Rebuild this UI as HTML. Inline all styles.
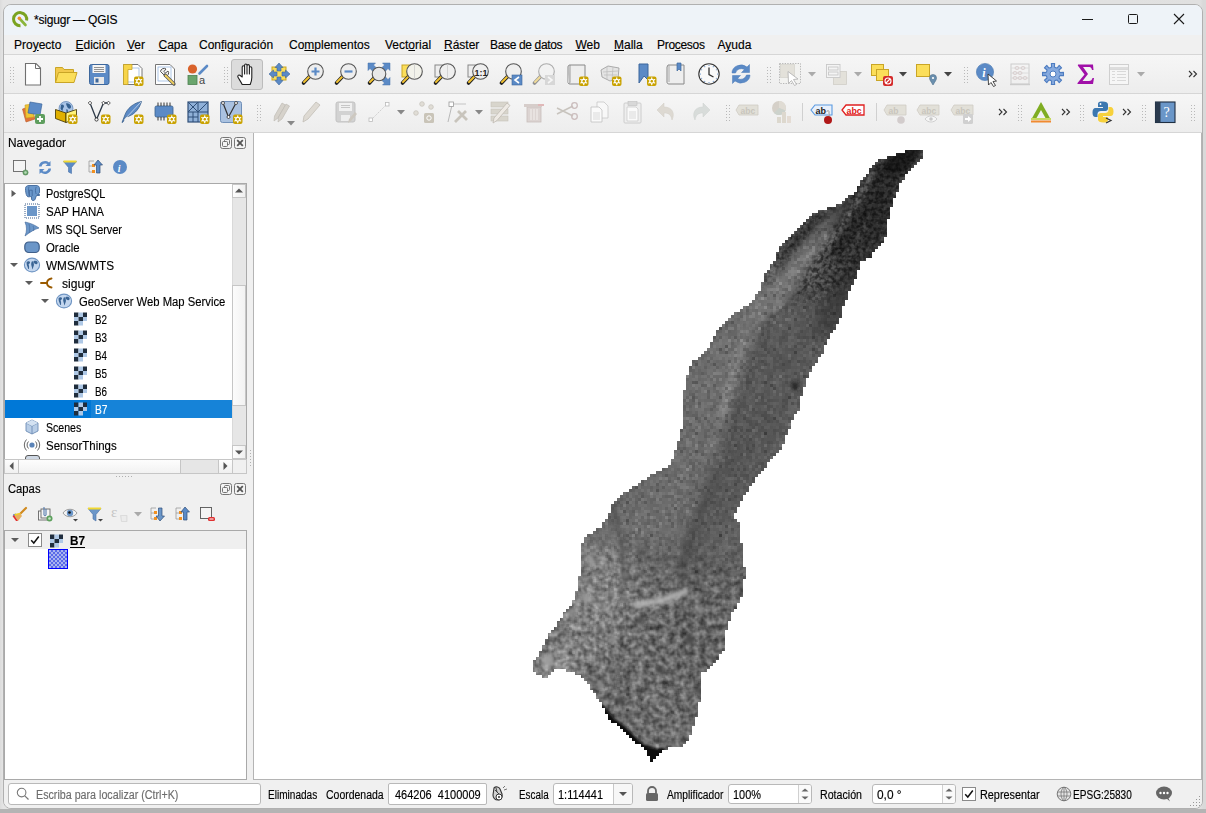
<!DOCTYPE html>
<html><head><meta charset="utf-8">
<style>
*{box-sizing:border-box}
html,body{margin:0;padding:0;width:1206px;height:813px;overflow:hidden;font-family:"Liberation Sans",sans-serif;font-size:12px;color:#000}
body{background:#e6e6e6}
.a{position:absolute}
.t{position:absolute;white-space:nowrap;line-height:14px}
u{text-decoration:underline;text-underline-offset:1px}
svg{overflow:visible}
.t{-webkit-text-stroke:0.15px currentColor}

</style></head><body>
<div class="a" style="left:0;top:0;width:1206px;height:813px;background:linear-gradient(90deg,#dcdcdc 0,#e4e4e4 3px,#e7e7e7 50%,#e0e0e0 1200px,#d9d9d9 1203px)"></div>
<div class="a" style="left:0;top:809px;width:1206px;height:4px;background:#b4b4b4"></div>
<div class="a" style="left:3px;top:4px;width:1200px;height:805px;border:1px solid #b0b0b0;border-radius:8px;background:#f0f0f0"></div>
<div class="a" style="left:4px;top:5px;width:1198px;height:30px;background:#eef3f8;border-radius:7px 7px 0 0"></div>
<div class="a" style="left:4px;top:35px;width:1198px;height:19px;background:#f0f0f0"></div>
<div class="a" style="left:4px;top:54px;width:1198px;height:1px;background:#d6d6d6"></div>
<div class="a" style="left:4px;top:55px;width:1198px;height:38px;background:linear-gradient(#f6f6f6,#ededed)"></div>
<div class="a" style="left:4px;top:93px;width:1198px;height:1px;background:#d6d6d6"></div>
<div class="a" style="left:4px;top:94px;width:1198px;height:38px;background:linear-gradient(#f6f6f6,#ededed)"></div>
<div class="a" style="left:4px;top:132px;width:1198px;height:1px;background:#d6d6d6"></div>
<div class="a" style="left:4px;top:133px;width:249px;height:647px;background:#f0f0f0"></div>
<div class="a" style="left:253px;top:133px;width:1px;height:647px;background:#b4b4b4"></div>
<div class="a" style="left:254px;top:133px;width:947px;height:646px;background:#fff"></div>
<div class="a" style="left:254px;top:779px;width:948px;height:1px;background:#b4b4b4"></div><div class="a" style="left:1201px;top:133px;width:1px;height:647px;background:#b4b4b4"></div>
<div class="a" style="left:4px;top:780px;width:1198px;height:28px;background:#f0f0f0;border-radius:0 0 7px 7px"></div>
<svg class="a" style="left:0;top:0" width="1206" height="813" viewBox="0 0 1206 813">
<defs>
<pattern id="bp1" patternUnits="userSpaceOnUse" x="530" y="147" width="69" height="69"><path fill="rgb(0,0,0)" d="M27 9h3v3h-3zM27 27h3v3h-3zM51 42h3v3h-3zM57 66h3v3h-3z"/><path fill="rgb(25,25,25)" d="M45 9h3v3h-3zM66 21h3v3h-3zM27 63h3v3h-3zM36 63h3v3h-3z"/><path fill="rgb(51,51,51)" d="M60 6h3v3h-3zM3 12h3v3h-3zM12 15h3v3h-3zM9 24h3v3h-3zM12 27h3v3h-3zM33 30h3v3h-3zM57 33h3v3h-3zM24 42h3v3h-3zM24 45h3v3h-3zM45 51h3v3h-3zM66 51h3v3h-3zM15 54h3v3h-3zM18 57h3v3h-3zM27 57h3v3h-3zM57 60h3v3h-3zM66 60h3v3h-3zM30 66h3v3h-3z"/><path fill="rgb(76,76,76)" d="M12 0h3v3h-3zM18 0h3v3h-3zM21 0h3v3h-3zM42 0h3v3h-3zM15 3h3v3h-3zM42 3h3v3h-3zM66 3h3v3h-3zM9 6h3v3h-3zM21 6h3v3h-3zM24 6h3v3h-3zM39 6h3v3h-3zM51 6h3v3h-3zM66 6h3v3h-3zM36 9h3v3h-3zM51 9h3v3h-3zM9 12h3v3h-3zM15 12h3v3h-3zM18 12h3v3h-3zM36 12h3v3h-3zM48 12h3v3h-3zM6 15h3v3h-3zM66 15h3v3h-3zM30 18h3v3h-3zM33 18h3v3h-3zM57 18h3v3h-3zM0 21h3v3h-3zM9 21h3v3h-3zM48 21h3v3h-3zM15 24h3v3h-3zM24 27h3v3h-3zM54 27h3v3h-3zM3 30h3v3h-3zM45 30h3v3h-3zM39 36h3v3h-3zM63 36h3v3h-3zM24 39h3v3h-3zM57 39h3v3h-3zM30 45h3v3h-3zM48 45h3v3h-3zM63 45h3v3h-3zM48 48h3v3h-3zM60 48h3v3h-3zM6 51h3v3h-3zM21 51h3v3h-3zM30 51h3v3h-3zM0 54h3v3h-3zM9 54h3v3h-3zM45 54h3v3h-3zM0 57h3v3h-3zM24 57h3v3h-3zM42 57h3v3h-3zM24 60h3v3h-3zM27 60h3v3h-3zM6 63h3v3h-3zM51 63h3v3h-3zM63 63h3v3h-3zM9 66h3v3h-3zM12 66h3v3h-3zM33 66h3v3h-3zM39 66h3v3h-3z"/><path fill="rgb(102,102,102)" d="M9 0h3v3h-3zM33 0h3v3h-3zM0 3h3v3h-3zM45 3h3v3h-3zM48 3h3v3h-3zM3 6h3v3h-3zM12 6h3v3h-3zM48 6h3v3h-3zM54 6h3v3h-3zM21 9h3v3h-3zM42 9h3v3h-3zM54 9h3v3h-3zM21 12h3v3h-3zM30 12h3v3h-3zM42 12h3v3h-3zM51 12h3v3h-3zM54 12h3v3h-3zM57 12h3v3h-3zM24 15h3v3h-3zM36 15h3v3h-3zM0 18h3v3h-3zM12 18h3v3h-3zM24 18h3v3h-3zM54 18h3v3h-3zM15 21h3v3h-3zM30 21h3v3h-3zM33 21h3v3h-3zM39 21h3v3h-3zM0 24h3v3h-3zM12 24h3v3h-3zM18 24h3v3h-3zM30 24h3v3h-3zM42 24h3v3h-3zM48 24h3v3h-3zM3 27h3v3h-3zM9 27h3v3h-3zM18 27h3v3h-3zM48 27h3v3h-3zM60 27h3v3h-3zM63 27h3v3h-3zM9 30h3v3h-3zM36 30h3v3h-3zM48 30h3v3h-3zM63 30h3v3h-3zM0 33h3v3h-3zM18 33h3v3h-3zM66 33h3v3h-3zM24 36h3v3h-3zM27 36h3v3h-3zM60 36h3v3h-3zM21 39h3v3h-3zM30 39h3v3h-3zM39 39h3v3h-3zM48 39h3v3h-3zM51 39h3v3h-3zM60 39h3v3h-3zM6 42h3v3h-3zM18 42h3v3h-3zM39 42h3v3h-3zM57 42h3v3h-3zM0 45h3v3h-3zM6 45h3v3h-3zM15 45h3v3h-3zM36 45h3v3h-3zM39 45h3v3h-3zM45 45h3v3h-3zM60 45h3v3h-3zM66 45h3v3h-3zM3 48h3v3h-3zM6 48h3v3h-3zM18 48h3v3h-3zM21 48h3v3h-3zM24 48h3v3h-3zM30 48h3v3h-3zM45 48h3v3h-3zM66 48h3v3h-3zM0 51h3v3h-3zM3 51h3v3h-3zM15 51h3v3h-3zM60 51h3v3h-3zM63 51h3v3h-3zM21 54h3v3h-3zM39 54h3v3h-3zM42 54h3v3h-3zM48 54h3v3h-3zM21 57h3v3h-3zM63 57h3v3h-3zM66 57h3v3h-3zM33 60h3v3h-3zM9 63h3v3h-3zM30 63h3v3h-3zM45 63h3v3h-3zM48 63h3v3h-3zM0 66h3v3h-3zM18 66h3v3h-3zM51 66h3v3h-3zM66 66h3v3h-3z"/><path fill="rgb(127,127,127)" d="M6 0h3v3h-3zM15 0h3v3h-3zM24 0h3v3h-3zM27 0h3v3h-3zM36 0h3v3h-3zM39 0h3v3h-3zM54 0h3v3h-3zM57 0h3v3h-3zM63 0h3v3h-3zM3 3h3v3h-3zM12 3h3v3h-3zM21 3h3v3h-3zM27 3h3v3h-3zM33 3h3v3h-3zM36 3h3v3h-3zM54 3h3v3h-3zM63 3h3v3h-3zM27 6h3v3h-3zM33 6h3v3h-3zM36 6h3v3h-3zM63 6h3v3h-3zM0 9h3v3h-3zM3 9h3v3h-3zM6 9h3v3h-3zM18 9h3v3h-3zM30 9h3v3h-3zM33 9h3v3h-3zM48 9h3v3h-3zM57 9h3v3h-3zM63 9h3v3h-3zM66 9h3v3h-3zM33 12h3v3h-3zM39 12h3v3h-3zM63 12h3v3h-3zM15 15h3v3h-3zM21 15h3v3h-3zM27 15h3v3h-3zM30 15h3v3h-3zM33 15h3v3h-3zM45 15h3v3h-3zM63 15h3v3h-3zM9 18h3v3h-3zM15 18h3v3h-3zM27 18h3v3h-3zM36 18h3v3h-3zM39 18h3v3h-3zM3 21h3v3h-3zM24 21h3v3h-3zM45 21h3v3h-3zM51 21h3v3h-3zM54 21h3v3h-3zM57 21h3v3h-3zM60 21h3v3h-3zM3 24h3v3h-3zM33 24h3v3h-3zM54 24h3v3h-3zM57 24h3v3h-3zM60 24h3v3h-3zM0 27h3v3h-3zM30 27h3v3h-3zM33 27h3v3h-3zM42 27h3v3h-3zM51 27h3v3h-3zM18 30h3v3h-3zM21 30h3v3h-3zM42 30h3v3h-3zM51 30h3v3h-3zM3 33h3v3h-3zM9 33h3v3h-3zM12 33h3v3h-3zM15 33h3v3h-3zM30 33h3v3h-3zM36 33h3v3h-3zM45 33h3v3h-3zM0 36h3v3h-3zM12 36h3v3h-3zM15 36h3v3h-3zM21 36h3v3h-3zM30 36h3v3h-3zM45 36h3v3h-3zM48 36h3v3h-3zM57 36h3v3h-3zM66 36h3v3h-3zM3 39h3v3h-3zM18 39h3v3h-3zM33 39h3v3h-3zM63 39h3v3h-3zM66 39h3v3h-3zM0 42h3v3h-3zM9 42h3v3h-3zM27 42h3v3h-3zM36 42h3v3h-3zM45 42h3v3h-3zM9 45h3v3h-3zM12 45h3v3h-3zM33 45h3v3h-3zM42 45h3v3h-3zM51 45h3v3h-3zM12 48h3v3h-3zM15 48h3v3h-3zM27 48h3v3h-3zM54 48h3v3h-3zM57 48h3v3h-3zM63 48h3v3h-3zM9 51h3v3h-3zM18 51h3v3h-3zM33 51h3v3h-3zM42 51h3v3h-3zM48 51h3v3h-3zM6 54h3v3h-3zM30 54h3v3h-3zM36 54h3v3h-3zM3 57h3v3h-3zM12 57h3v3h-3zM15 57h3v3h-3zM36 57h3v3h-3zM60 57h3v3h-3zM6 60h3v3h-3zM15 60h3v3h-3zM18 60h3v3h-3zM21 60h3v3h-3zM36 60h3v3h-3zM42 60h3v3h-3zM48 60h3v3h-3zM63 60h3v3h-3zM0 63h3v3h-3zM3 63h3v3h-3zM33 63h3v3h-3zM54 63h3v3h-3zM57 63h3v3h-3zM60 63h3v3h-3zM15 66h3v3h-3zM27 66h3v3h-3zM45 66h3v3h-3zM54 66h3v3h-3zM60 66h3v3h-3z"/><path fill="rgb(153,153,153)" d="M30 0h3v3h-3zM45 0h3v3h-3zM48 0h3v3h-3zM66 0h3v3h-3zM9 3h3v3h-3zM18 3h3v3h-3zM24 3h3v3h-3zM39 3h3v3h-3zM57 3h3v3h-3zM60 3h3v3h-3zM6 6h3v3h-3zM30 6h3v3h-3zM42 6h3v3h-3zM57 6h3v3h-3zM12 9h3v3h-3zM24 9h3v3h-3zM39 9h3v3h-3zM0 12h3v3h-3zM12 12h3v3h-3zM27 12h3v3h-3zM45 12h3v3h-3zM60 12h3v3h-3zM66 12h3v3h-3zM9 15h3v3h-3zM42 15h3v3h-3zM48 15h3v3h-3zM51 15h3v3h-3zM57 15h3v3h-3zM60 15h3v3h-3zM48 18h3v3h-3zM60 18h3v3h-3zM66 18h3v3h-3zM12 21h3v3h-3zM21 21h3v3h-3zM21 24h3v3h-3zM24 24h3v3h-3zM39 24h3v3h-3zM63 24h3v3h-3zM6 27h3v3h-3zM15 27h3v3h-3zM39 27h3v3h-3zM45 27h3v3h-3zM57 27h3v3h-3zM66 27h3v3h-3zM0 30h3v3h-3zM12 30h3v3h-3zM27 30h3v3h-3zM30 30h3v3h-3zM54 30h3v3h-3zM57 30h3v3h-3zM27 33h3v3h-3zM39 33h3v3h-3zM42 33h3v3h-3zM63 33h3v3h-3zM9 36h3v3h-3zM18 36h3v3h-3zM33 36h3v3h-3zM42 36h3v3h-3zM6 39h3v3h-3zM9 39h3v3h-3zM12 39h3v3h-3zM27 39h3v3h-3zM36 39h3v3h-3zM45 39h3v3h-3zM3 42h3v3h-3zM15 42h3v3h-3zM30 42h3v3h-3zM42 42h3v3h-3zM48 42h3v3h-3zM54 42h3v3h-3zM63 42h3v3h-3zM66 42h3v3h-3zM3 45h3v3h-3zM21 45h3v3h-3zM27 45h3v3h-3zM54 45h3v3h-3zM0 48h3v3h-3zM9 48h3v3h-3zM33 48h3v3h-3zM36 48h3v3h-3zM39 48h3v3h-3zM42 48h3v3h-3zM51 48h3v3h-3zM24 51h3v3h-3zM39 51h3v3h-3zM51 51h3v3h-3zM57 51h3v3h-3zM24 54h3v3h-3zM27 54h3v3h-3zM54 54h3v3h-3zM63 54h3v3h-3zM66 54h3v3h-3zM9 57h3v3h-3zM30 57h3v3h-3zM39 57h3v3h-3zM45 57h3v3h-3zM48 57h3v3h-3zM57 57h3v3h-3zM0 60h3v3h-3zM3 60h3v3h-3zM12 60h3v3h-3zM30 60h3v3h-3zM54 60h3v3h-3zM12 63h3v3h-3zM39 63h3v3h-3zM42 63h3v3h-3zM66 63h3v3h-3zM6 66h3v3h-3zM21 66h3v3h-3zM24 66h3v3h-3zM36 66h3v3h-3zM48 66h3v3h-3zM63 66h3v3h-3z"/><path fill="rgb(178,178,178)" d="M0 0h3v3h-3zM3 0h3v3h-3zM60 0h3v3h-3zM6 3h3v3h-3zM30 3h3v3h-3zM0 6h3v3h-3zM15 6h3v3h-3zM18 6h3v3h-3zM45 6h3v3h-3zM9 9h3v3h-3zM15 9h3v3h-3zM60 9h3v3h-3zM6 12h3v3h-3zM0 15h3v3h-3zM3 15h3v3h-3zM39 15h3v3h-3zM54 15h3v3h-3zM3 18h3v3h-3zM6 18h3v3h-3zM21 18h3v3h-3zM42 18h3v3h-3zM45 18h3v3h-3zM51 18h3v3h-3zM6 21h3v3h-3zM18 21h3v3h-3zM63 21h3v3h-3zM27 24h3v3h-3zM36 24h3v3h-3zM45 24h3v3h-3zM21 27h3v3h-3zM15 30h3v3h-3zM39 30h3v3h-3zM60 30h3v3h-3zM66 30h3v3h-3zM21 33h3v3h-3zM24 33h3v3h-3zM33 33h3v3h-3zM54 33h3v3h-3zM3 36h3v3h-3zM6 36h3v3h-3zM51 36h3v3h-3zM54 36h3v3h-3zM0 39h3v3h-3zM15 39h3v3h-3zM54 39h3v3h-3zM12 42h3v3h-3zM33 42h3v3h-3zM60 42h3v3h-3zM12 51h3v3h-3zM36 51h3v3h-3zM54 51h3v3h-3zM3 54h3v3h-3zM12 54h3v3h-3zM18 54h3v3h-3zM33 54h3v3h-3zM51 54h3v3h-3zM57 54h3v3h-3zM33 57h3v3h-3zM51 57h3v3h-3zM54 57h3v3h-3zM39 60h3v3h-3zM45 60h3v3h-3zM51 60h3v3h-3zM60 60h3v3h-3zM15 63h3v3h-3zM18 63h3v3h-3zM21 63h3v3h-3zM24 63h3v3h-3zM3 66h3v3h-3zM42 66h3v3h-3z"/><path fill="rgb(204,204,204)" d="M51 3h3v3h-3zM24 12h3v3h-3zM18 15h3v3h-3zM18 18h3v3h-3zM27 21h3v3h-3zM36 21h3v3h-3zM6 24h3v3h-3zM51 24h3v3h-3zM66 24h3v3h-3zM36 27h3v3h-3zM6 30h3v3h-3zM24 30h3v3h-3zM6 33h3v3h-3zM48 33h3v3h-3zM51 33h3v3h-3zM60 33h3v3h-3zM42 39h3v3h-3zM21 42h3v3h-3zM18 45h3v3h-3zM57 45h3v3h-3zM27 51h3v3h-3zM9 60h3v3h-3z"/><path fill="rgb(229,229,229)" d="M51 0h3v3h-3zM63 18h3v3h-3zM42 21h3v3h-3zM36 36h3v3h-3zM60 54h3v3h-3zM6 57h3v3h-3z"/></pattern><pattern id="bp2" patternUnits="userSpaceOnUse" x="530" y="147" width="93" height="93"><path fill="rgb(0,0,0)" d="M45 0h3v3h-3zM3 3h3v3h-3zM3 15h3v3h-3zM57 54h3v3h-3zM0 84h3v3h-3z"/><path fill="rgb(25,25,25)" d="M57 3h3v3h-3zM48 6h3v3h-3zM36 18h3v3h-3zM66 27h3v3h-3zM9 42h3v3h-3zM27 42h3v3h-3zM30 48h3v3h-3zM75 69h3v3h-3zM87 75h3v3h-3zM15 81h3v3h-3zM51 81h3v3h-3z"/><path fill="rgb(51,51,51)" d="M24 3h3v3h-3zM30 3h3v3h-3zM33 3h3v3h-3zM48 3h3v3h-3zM63 3h3v3h-3zM81 3h3v3h-3zM9 12h3v3h-3zM3 21h3v3h-3zM45 21h3v3h-3zM48 21h3v3h-3zM36 24h3v3h-3zM57 24h3v3h-3zM45 27h3v3h-3zM90 27h3v3h-3zM27 30h3v3h-3zM15 33h3v3h-3zM66 33h3v3h-3zM12 36h3v3h-3zM66 36h3v3h-3zM15 42h3v3h-3zM21 42h3v3h-3zM54 42h3v3h-3zM81 45h3v3h-3zM69 48h3v3h-3zM54 51h3v3h-3zM90 51h3v3h-3zM18 57h3v3h-3zM69 63h3v3h-3zM84 63h3v3h-3zM66 66h3v3h-3zM18 69h3v3h-3zM48 69h3v3h-3zM6 72h3v3h-3zM57 75h3v3h-3zM27 81h3v3h-3zM27 84h3v3h-3zM18 87h3v3h-3z"/><path fill="rgb(76,76,76)" d="M15 0h3v3h-3zM24 0h3v3h-3zM72 0h3v3h-3zM78 0h3v3h-3zM18 3h3v3h-3zM51 3h3v3h-3zM69 3h3v3h-3zM90 3h3v3h-3zM30 6h3v3h-3zM39 6h3v3h-3zM63 6h3v3h-3zM15 9h3v3h-3zM81 9h3v3h-3zM84 9h3v3h-3zM15 12h3v3h-3zM21 12h3v3h-3zM12 15h3v3h-3zM27 15h3v3h-3zM30 15h3v3h-3zM39 15h3v3h-3zM75 15h3v3h-3zM6 18h3v3h-3zM18 18h3v3h-3zM69 18h3v3h-3zM78 18h3v3h-3zM30 21h3v3h-3zM60 21h3v3h-3zM66 21h3v3h-3zM81 21h3v3h-3zM18 24h3v3h-3zM75 24h3v3h-3zM78 24h3v3h-3zM24 27h3v3h-3zM48 27h3v3h-3zM57 27h3v3h-3zM72 27h3v3h-3zM84 27h3v3h-3zM6 30h3v3h-3zM30 30h3v3h-3zM33 30h3v3h-3zM45 30h3v3h-3zM51 30h3v3h-3zM69 30h3v3h-3zM90 30h3v3h-3zM24 33h3v3h-3zM27 33h3v3h-3zM60 33h3v3h-3zM6 36h3v3h-3zM24 36h3v3h-3zM42 36h3v3h-3zM45 36h3v3h-3zM75 36h3v3h-3zM36 39h3v3h-3zM39 39h3v3h-3zM78 39h3v3h-3zM81 39h3v3h-3zM87 39h3v3h-3zM81 42h3v3h-3zM87 42h3v3h-3zM57 45h3v3h-3zM12 48h3v3h-3zM24 48h3v3h-3zM42 48h3v3h-3zM66 48h3v3h-3zM48 51h3v3h-3zM81 51h3v3h-3zM3 54h3v3h-3zM30 54h3v3h-3zM36 54h3v3h-3zM45 54h3v3h-3zM69 54h3v3h-3zM84 54h3v3h-3zM90 54h3v3h-3zM0 57h3v3h-3zM6 57h3v3h-3zM36 57h3v3h-3zM84 57h3v3h-3zM18 60h3v3h-3zM33 60h3v3h-3zM39 60h3v3h-3zM84 60h3v3h-3zM87 60h3v3h-3zM0 63h3v3h-3zM39 63h3v3h-3zM72 63h3v3h-3zM15 66h3v3h-3zM21 66h3v3h-3zM54 66h3v3h-3zM87 66h3v3h-3zM3 69h3v3h-3zM12 69h3v3h-3zM39 69h3v3h-3zM45 69h3v3h-3zM12 72h3v3h-3zM15 72h3v3h-3zM30 72h3v3h-3zM54 72h3v3h-3zM60 72h3v3h-3zM51 75h3v3h-3zM81 75h3v3h-3zM3 78h3v3h-3zM36 78h3v3h-3zM78 78h3v3h-3zM90 78h3v3h-3zM3 81h3v3h-3zM9 81h3v3h-3zM24 81h3v3h-3zM36 81h3v3h-3zM45 81h3v3h-3zM63 81h3v3h-3zM66 81h3v3h-3zM9 84h3v3h-3zM18 84h3v3h-3zM33 84h3v3h-3zM54 84h3v3h-3zM57 84h3v3h-3zM24 87h3v3h-3zM45 87h3v3h-3zM57 87h3v3h-3zM3 90h3v3h-3zM12 90h3v3h-3zM36 90h3v3h-3zM39 90h3v3h-3zM66 90h3v3h-3z"/><path fill="rgb(102,102,102)" d="M3 0h3v3h-3zM18 0h3v3h-3zM21 0h3v3h-3zM27 0h3v3h-3zM30 0h3v3h-3zM36 0h3v3h-3zM42 0h3v3h-3zM51 0h3v3h-3zM54 0h3v3h-3zM66 0h3v3h-3zM12 3h3v3h-3zM78 3h3v3h-3zM84 3h3v3h-3zM9 6h3v3h-3zM15 6h3v3h-3zM21 6h3v3h-3zM27 6h3v3h-3zM36 6h3v3h-3zM69 6h3v3h-3zM75 6h3v3h-3zM78 6h3v3h-3zM81 6h3v3h-3zM6 9h3v3h-3zM54 9h3v3h-3zM24 12h3v3h-3zM30 12h3v3h-3zM33 12h3v3h-3zM45 12h3v3h-3zM48 12h3v3h-3zM51 12h3v3h-3zM54 12h3v3h-3zM66 12h3v3h-3zM69 12h3v3h-3zM36 15h3v3h-3zM51 15h3v3h-3zM60 15h3v3h-3zM81 15h3v3h-3zM3 18h3v3h-3zM33 18h3v3h-3zM42 18h3v3h-3zM45 18h3v3h-3zM21 21h3v3h-3zM57 21h3v3h-3zM69 21h3v3h-3zM78 21h3v3h-3zM90 21h3v3h-3zM3 24h3v3h-3zM12 24h3v3h-3zM27 24h3v3h-3zM33 24h3v3h-3zM60 24h3v3h-3zM63 24h3v3h-3zM72 24h3v3h-3zM0 27h3v3h-3zM12 27h3v3h-3zM18 27h3v3h-3zM33 27h3v3h-3zM63 27h3v3h-3zM69 27h3v3h-3zM24 30h3v3h-3zM63 30h3v3h-3zM84 30h3v3h-3zM0 33h3v3h-3zM21 33h3v3h-3zM33 33h3v3h-3zM63 33h3v3h-3zM72 33h3v3h-3zM81 33h3v3h-3zM18 36h3v3h-3zM39 36h3v3h-3zM48 36h3v3h-3zM51 36h3v3h-3zM57 36h3v3h-3zM60 36h3v3h-3zM63 36h3v3h-3zM69 36h3v3h-3zM84 36h3v3h-3zM90 36h3v3h-3zM9 39h3v3h-3zM21 39h3v3h-3zM27 39h3v3h-3zM48 39h3v3h-3zM63 39h3v3h-3zM72 39h3v3h-3zM3 42h3v3h-3zM6 42h3v3h-3zM30 42h3v3h-3zM36 42h3v3h-3zM39 42h3v3h-3zM42 42h3v3h-3zM72 42h3v3h-3zM90 42h3v3h-3zM6 45h3v3h-3zM51 45h3v3h-3zM54 45h3v3h-3zM72 45h3v3h-3zM78 45h3v3h-3zM87 45h3v3h-3zM0 48h3v3h-3zM3 48h3v3h-3zM18 48h3v3h-3zM27 48h3v3h-3zM33 48h3v3h-3zM6 51h3v3h-3zM27 51h3v3h-3zM33 51h3v3h-3zM51 51h3v3h-3zM18 54h3v3h-3zM21 54h3v3h-3zM24 54h3v3h-3zM48 54h3v3h-3zM66 54h3v3h-3zM87 54h3v3h-3zM3 57h3v3h-3zM33 57h3v3h-3zM51 57h3v3h-3zM66 57h3v3h-3zM72 57h3v3h-3zM75 57h3v3h-3zM90 57h3v3h-3zM3 60h3v3h-3zM9 60h3v3h-3zM12 60h3v3h-3zM42 60h3v3h-3zM48 60h3v3h-3zM66 60h3v3h-3zM69 60h3v3h-3zM81 60h3v3h-3zM12 63h3v3h-3zM27 63h3v3h-3zM36 63h3v3h-3zM51 63h3v3h-3zM75 63h3v3h-3zM78 63h3v3h-3zM3 66h3v3h-3zM18 66h3v3h-3zM42 66h3v3h-3zM69 66h3v3h-3zM90 66h3v3h-3zM15 69h3v3h-3zM27 69h3v3h-3zM42 69h3v3h-3zM63 69h3v3h-3zM69 69h3v3h-3zM81 69h3v3h-3zM90 69h3v3h-3zM21 72h3v3h-3zM57 72h3v3h-3zM69 72h3v3h-3zM81 72h3v3h-3zM84 72h3v3h-3zM87 72h3v3h-3zM12 75h3v3h-3zM39 75h3v3h-3zM69 75h3v3h-3zM30 78h3v3h-3zM33 78h3v3h-3zM42 78h3v3h-3zM57 78h3v3h-3zM66 78h3v3h-3zM81 78h3v3h-3zM12 81h3v3h-3zM48 81h3v3h-3zM69 81h3v3h-3zM72 81h3v3h-3zM78 81h3v3h-3zM87 81h3v3h-3zM90 81h3v3h-3zM15 84h3v3h-3zM30 84h3v3h-3zM42 84h3v3h-3zM51 84h3v3h-3zM72 84h3v3h-3zM75 84h3v3h-3zM81 84h3v3h-3zM6 87h3v3h-3zM9 87h3v3h-3zM27 87h3v3h-3zM30 87h3v3h-3zM33 87h3v3h-3zM36 87h3v3h-3zM39 87h3v3h-3zM48 87h3v3h-3zM51 87h3v3h-3zM84 87h3v3h-3zM87 87h3v3h-3zM90 87h3v3h-3zM6 90h3v3h-3zM18 90h3v3h-3zM33 90h3v3h-3zM78 90h3v3h-3zM84 90h3v3h-3z"/><path fill="rgb(127,127,127)" d="M9 0h3v3h-3zM33 0h3v3h-3zM57 0h3v3h-3zM60 0h3v3h-3zM63 0h3v3h-3zM69 0h3v3h-3zM81 0h3v3h-3zM84 0h3v3h-3zM87 0h3v3h-3zM90 0h3v3h-3zM6 3h3v3h-3zM9 3h3v3h-3zM21 3h3v3h-3zM27 3h3v3h-3zM42 3h3v3h-3zM45 3h3v3h-3zM54 3h3v3h-3zM60 3h3v3h-3zM66 3h3v3h-3zM87 3h3v3h-3zM0 6h3v3h-3zM6 6h3v3h-3zM33 6h3v3h-3zM42 6h3v3h-3zM51 6h3v3h-3zM54 6h3v3h-3zM57 6h3v3h-3zM72 6h3v3h-3zM84 6h3v3h-3zM24 9h3v3h-3zM42 9h3v3h-3zM48 9h3v3h-3zM51 9h3v3h-3zM63 9h3v3h-3zM66 9h3v3h-3zM72 9h3v3h-3zM78 9h3v3h-3zM3 12h3v3h-3zM6 12h3v3h-3zM27 12h3v3h-3zM57 12h3v3h-3zM63 12h3v3h-3zM75 12h3v3h-3zM78 12h3v3h-3zM81 12h3v3h-3zM87 12h3v3h-3zM6 15h3v3h-3zM15 15h3v3h-3zM21 15h3v3h-3zM33 15h3v3h-3zM45 15h3v3h-3zM48 15h3v3h-3zM54 15h3v3h-3zM57 15h3v3h-3zM69 15h3v3h-3zM78 15h3v3h-3zM12 18h3v3h-3zM15 18h3v3h-3zM24 18h3v3h-3zM30 18h3v3h-3zM39 18h3v3h-3zM51 18h3v3h-3zM57 18h3v3h-3zM75 18h3v3h-3zM27 21h3v3h-3zM51 21h3v3h-3zM54 21h3v3h-3zM63 21h3v3h-3zM75 21h3v3h-3zM84 21h3v3h-3zM6 24h3v3h-3zM15 24h3v3h-3zM30 24h3v3h-3zM51 24h3v3h-3zM66 24h3v3h-3zM9 27h3v3h-3zM21 27h3v3h-3zM30 27h3v3h-3zM36 27h3v3h-3zM39 27h3v3h-3zM42 27h3v3h-3zM60 27h3v3h-3zM78 27h3v3h-3zM81 27h3v3h-3zM87 27h3v3h-3zM0 30h3v3h-3zM15 30h3v3h-3zM21 30h3v3h-3zM39 30h3v3h-3zM42 30h3v3h-3zM60 30h3v3h-3zM66 30h3v3h-3zM87 30h3v3h-3zM9 33h3v3h-3zM12 33h3v3h-3zM18 33h3v3h-3zM30 33h3v3h-3zM39 33h3v3h-3zM42 33h3v3h-3zM57 33h3v3h-3zM84 33h3v3h-3zM90 33h3v3h-3zM3 36h3v3h-3zM9 36h3v3h-3zM27 36h3v3h-3zM33 36h3v3h-3zM54 36h3v3h-3zM78 36h3v3h-3zM87 36h3v3h-3zM15 39h3v3h-3zM24 39h3v3h-3zM30 39h3v3h-3zM69 39h3v3h-3zM12 42h3v3h-3zM24 42h3v3h-3zM51 42h3v3h-3zM57 42h3v3h-3zM66 42h3v3h-3zM69 42h3v3h-3zM84 42h3v3h-3zM0 45h3v3h-3zM9 45h3v3h-3zM24 45h3v3h-3zM33 45h3v3h-3zM39 45h3v3h-3zM45 45h3v3h-3zM66 45h3v3h-3zM75 45h3v3h-3zM84 45h3v3h-3zM9 48h3v3h-3zM15 48h3v3h-3zM39 48h3v3h-3zM45 48h3v3h-3zM48 48h3v3h-3zM51 48h3v3h-3zM78 48h3v3h-3zM81 48h3v3h-3zM90 48h3v3h-3zM3 51h3v3h-3zM12 51h3v3h-3zM21 51h3v3h-3zM30 51h3v3h-3zM36 51h3v3h-3zM78 51h3v3h-3zM0 54h3v3h-3zM9 54h3v3h-3zM51 54h3v3h-3zM54 54h3v3h-3zM60 54h3v3h-3zM75 54h3v3h-3zM78 54h3v3h-3zM21 57h3v3h-3zM24 57h3v3h-3zM27 57h3v3h-3zM48 57h3v3h-3zM54 57h3v3h-3zM63 57h3v3h-3zM81 57h3v3h-3zM87 57h3v3h-3zM0 60h3v3h-3zM27 60h3v3h-3zM30 60h3v3h-3zM36 60h3v3h-3zM45 60h3v3h-3zM51 60h3v3h-3zM3 63h3v3h-3zM18 63h3v3h-3zM21 63h3v3h-3zM33 63h3v3h-3zM45 63h3v3h-3zM48 63h3v3h-3zM54 63h3v3h-3zM63 63h3v3h-3zM66 63h3v3h-3zM24 66h3v3h-3zM51 66h3v3h-3zM57 66h3v3h-3zM60 66h3v3h-3zM78 66h3v3h-3zM81 66h3v3h-3zM84 66h3v3h-3zM0 69h3v3h-3zM6 69h3v3h-3zM9 69h3v3h-3zM21 69h3v3h-3zM24 69h3v3h-3zM30 69h3v3h-3zM66 69h3v3h-3zM24 72h3v3h-3zM27 72h3v3h-3zM39 72h3v3h-3zM45 72h3v3h-3zM48 72h3v3h-3zM51 72h3v3h-3zM66 72h3v3h-3zM90 72h3v3h-3zM0 75h3v3h-3zM3 75h3v3h-3zM18 75h3v3h-3zM21 75h3v3h-3zM24 75h3v3h-3zM27 75h3v3h-3zM36 75h3v3h-3zM42 75h3v3h-3zM45 75h3v3h-3zM48 75h3v3h-3zM54 75h3v3h-3zM72 75h3v3h-3zM78 75h3v3h-3zM84 75h3v3h-3zM21 78h3v3h-3zM27 78h3v3h-3zM60 78h3v3h-3zM63 78h3v3h-3zM75 78h3v3h-3zM84 78h3v3h-3zM21 81h3v3h-3zM30 81h3v3h-3zM33 81h3v3h-3zM42 81h3v3h-3zM60 81h3v3h-3zM75 81h3v3h-3zM3 84h3v3h-3zM36 84h3v3h-3zM39 84h3v3h-3zM45 84h3v3h-3zM66 84h3v3h-3zM84 84h3v3h-3zM87 84h3v3h-3zM0 87h3v3h-3zM3 87h3v3h-3zM54 87h3v3h-3zM60 87h3v3h-3zM63 87h3v3h-3zM72 87h3v3h-3zM75 87h3v3h-3zM81 87h3v3h-3zM9 90h3v3h-3zM48 90h3v3h-3zM51 90h3v3h-3zM60 90h3v3h-3zM75 90h3v3h-3zM87 90h3v3h-3z"/><path fill="rgb(153,153,153)" d="M6 0h3v3h-3zM12 0h3v3h-3zM39 0h3v3h-3zM0 3h3v3h-3zM39 3h3v3h-3zM75 3h3v3h-3zM3 6h3v3h-3zM12 6h3v3h-3zM18 6h3v3h-3zM45 6h3v3h-3zM60 6h3v3h-3zM66 6h3v3h-3zM0 9h3v3h-3zM3 9h3v3h-3zM9 9h3v3h-3zM18 9h3v3h-3zM21 9h3v3h-3zM27 9h3v3h-3zM45 9h3v3h-3zM57 9h3v3h-3zM69 9h3v3h-3zM75 9h3v3h-3zM87 9h3v3h-3zM90 9h3v3h-3zM36 12h3v3h-3zM39 12h3v3h-3zM42 12h3v3h-3zM60 12h3v3h-3zM84 12h3v3h-3zM0 15h3v3h-3zM42 15h3v3h-3zM63 15h3v3h-3zM66 15h3v3h-3zM72 15h3v3h-3zM87 15h3v3h-3zM9 18h3v3h-3zM21 18h3v3h-3zM27 18h3v3h-3zM60 18h3v3h-3zM63 18h3v3h-3zM66 18h3v3h-3zM81 18h3v3h-3zM84 18h3v3h-3zM90 18h3v3h-3zM0 21h3v3h-3zM12 21h3v3h-3zM15 21h3v3h-3zM24 21h3v3h-3zM33 21h3v3h-3zM36 21h3v3h-3zM72 21h3v3h-3zM9 24h3v3h-3zM21 24h3v3h-3zM42 24h3v3h-3zM45 24h3v3h-3zM48 24h3v3h-3zM69 24h3v3h-3zM81 24h3v3h-3zM87 24h3v3h-3zM6 27h3v3h-3zM15 27h3v3h-3zM51 27h3v3h-3zM75 27h3v3h-3zM9 30h3v3h-3zM72 30h3v3h-3zM78 30h3v3h-3zM3 33h3v3h-3zM36 33h3v3h-3zM48 33h3v3h-3zM51 33h3v3h-3zM69 33h3v3h-3zM75 33h3v3h-3zM78 33h3v3h-3zM0 36h3v3h-3zM15 36h3v3h-3zM30 36h3v3h-3zM36 36h3v3h-3zM72 36h3v3h-3zM81 36h3v3h-3zM12 39h3v3h-3zM18 39h3v3h-3zM42 39h3v3h-3zM45 39h3v3h-3zM51 39h3v3h-3zM54 39h3v3h-3zM57 39h3v3h-3zM66 39h3v3h-3zM75 39h3v3h-3zM45 42h3v3h-3zM48 42h3v3h-3zM75 42h3v3h-3zM3 45h3v3h-3zM15 45h3v3h-3zM18 45h3v3h-3zM21 45h3v3h-3zM27 45h3v3h-3zM30 45h3v3h-3zM42 45h3v3h-3zM48 45h3v3h-3zM63 45h3v3h-3zM69 45h3v3h-3zM72 48h3v3h-3zM75 48h3v3h-3zM84 48h3v3h-3zM87 48h3v3h-3zM0 51h3v3h-3zM18 51h3v3h-3zM39 51h3v3h-3zM45 51h3v3h-3zM57 51h3v3h-3zM60 51h3v3h-3zM63 51h3v3h-3zM66 51h3v3h-3zM69 51h3v3h-3zM72 51h3v3h-3zM75 51h3v3h-3zM6 54h3v3h-3zM27 54h3v3h-3zM33 54h3v3h-3zM42 54h3v3h-3zM81 54h3v3h-3zM12 57h3v3h-3zM15 57h3v3h-3zM30 57h3v3h-3zM57 57h3v3h-3zM78 57h3v3h-3zM6 60h3v3h-3zM21 60h3v3h-3zM24 60h3v3h-3zM54 60h3v3h-3zM60 60h3v3h-3zM72 60h3v3h-3zM78 60h3v3h-3zM6 63h3v3h-3zM9 63h3v3h-3zM24 63h3v3h-3zM30 63h3v3h-3zM42 63h3v3h-3zM57 63h3v3h-3zM81 63h3v3h-3zM87 63h3v3h-3zM90 63h3v3h-3zM6 66h3v3h-3zM27 66h3v3h-3zM33 66h3v3h-3zM36 66h3v3h-3zM45 66h3v3h-3zM63 66h3v3h-3zM33 69h3v3h-3zM36 69h3v3h-3zM54 69h3v3h-3zM60 69h3v3h-3zM78 69h3v3h-3zM84 69h3v3h-3zM63 72h3v3h-3zM75 72h3v3h-3zM9 75h3v3h-3zM15 75h3v3h-3zM30 75h3v3h-3zM63 75h3v3h-3zM66 75h3v3h-3zM0 78h3v3h-3zM6 78h3v3h-3zM12 78h3v3h-3zM15 78h3v3h-3zM39 78h3v3h-3zM45 78h3v3h-3zM48 78h3v3h-3zM6 81h3v3h-3zM18 81h3v3h-3zM39 81h3v3h-3zM54 81h3v3h-3zM81 81h3v3h-3zM6 84h3v3h-3zM21 84h3v3h-3zM24 84h3v3h-3zM48 84h3v3h-3zM60 84h3v3h-3zM69 84h3v3h-3zM69 87h3v3h-3zM0 90h3v3h-3zM15 90h3v3h-3zM21 90h3v3h-3zM24 90h3v3h-3zM42 90h3v3h-3zM45 90h3v3h-3zM57 90h3v3h-3zM63 90h3v3h-3zM90 90h3v3h-3z"/><path fill="rgb(178,178,178)" d="M48 0h3v3h-3zM75 0h3v3h-3zM15 3h3v3h-3zM24 6h3v3h-3zM90 6h3v3h-3zM30 9h3v3h-3zM36 9h3v3h-3zM60 9h3v3h-3zM0 12h3v3h-3zM12 12h3v3h-3zM18 12h3v3h-3zM72 12h3v3h-3zM90 12h3v3h-3zM18 15h3v3h-3zM24 15h3v3h-3zM84 15h3v3h-3zM48 18h3v3h-3zM54 18h3v3h-3zM72 18h3v3h-3zM87 18h3v3h-3zM9 21h3v3h-3zM18 21h3v3h-3zM42 21h3v3h-3zM24 24h3v3h-3zM84 24h3v3h-3zM3 27h3v3h-3zM54 27h3v3h-3zM3 30h3v3h-3zM12 30h3v3h-3zM18 30h3v3h-3zM54 30h3v3h-3zM57 30h3v3h-3zM81 30h3v3h-3zM45 33h3v3h-3zM54 33h3v3h-3zM87 33h3v3h-3zM21 36h3v3h-3zM3 39h3v3h-3zM6 39h3v3h-3zM60 39h3v3h-3zM84 39h3v3h-3zM0 42h3v3h-3zM33 42h3v3h-3zM60 42h3v3h-3zM12 45h3v3h-3zM36 45h3v3h-3zM60 45h3v3h-3zM90 45h3v3h-3zM6 48h3v3h-3zM9 51h3v3h-3zM24 51h3v3h-3zM84 51h3v3h-3zM87 51h3v3h-3zM12 54h3v3h-3zM15 54h3v3h-3zM39 54h3v3h-3zM63 54h3v3h-3zM72 54h3v3h-3zM39 57h3v3h-3zM69 57h3v3h-3zM15 60h3v3h-3zM57 60h3v3h-3zM63 60h3v3h-3zM75 60h3v3h-3zM90 60h3v3h-3zM60 63h3v3h-3zM9 66h3v3h-3zM12 66h3v3h-3zM30 66h3v3h-3zM39 66h3v3h-3zM48 66h3v3h-3zM75 66h3v3h-3zM51 69h3v3h-3zM57 69h3v3h-3zM72 69h3v3h-3zM87 69h3v3h-3zM0 72h3v3h-3zM3 72h3v3h-3zM18 72h3v3h-3zM36 72h3v3h-3zM72 72h3v3h-3zM33 75h3v3h-3zM60 75h3v3h-3zM75 75h3v3h-3zM90 75h3v3h-3zM9 78h3v3h-3zM18 78h3v3h-3zM24 78h3v3h-3zM72 78h3v3h-3zM0 81h3v3h-3zM57 81h3v3h-3zM84 81h3v3h-3zM12 84h3v3h-3zM78 84h3v3h-3zM90 84h3v3h-3zM12 87h3v3h-3zM21 87h3v3h-3zM27 90h3v3h-3zM54 90h3v3h-3zM69 90h3v3h-3zM81 90h3v3h-3z"/><path fill="rgb(204,204,204)" d="M72 3h3v3h-3zM87 6h3v3h-3zM12 9h3v3h-3zM33 9h3v3h-3zM39 9h3v3h-3zM90 15h3v3h-3zM0 18h3v3h-3zM6 21h3v3h-3zM39 21h3v3h-3zM87 21h3v3h-3zM0 24h3v3h-3zM90 24h3v3h-3zM27 27h3v3h-3zM48 30h3v3h-3zM75 30h3v3h-3zM33 39h3v3h-3zM90 39h3v3h-3zM18 42h3v3h-3zM78 42h3v3h-3zM21 48h3v3h-3zM36 48h3v3h-3zM57 48h3v3h-3zM60 48h3v3h-3zM63 48h3v3h-3zM15 51h3v3h-3zM42 51h3v3h-3zM9 57h3v3h-3zM45 57h3v3h-3zM60 57h3v3h-3zM15 63h3v3h-3zM72 66h3v3h-3zM9 72h3v3h-3zM33 72h3v3h-3zM42 72h3v3h-3zM78 72h3v3h-3zM6 75h3v3h-3zM51 78h3v3h-3zM54 78h3v3h-3zM69 78h3v3h-3zM87 78h3v3h-3zM63 84h3v3h-3zM15 87h3v3h-3zM42 87h3v3h-3zM66 87h3v3h-3zM78 87h3v3h-3zM30 90h3v3h-3zM72 90h3v3h-3z"/><path fill="rgb(229,229,229)" d="M0 0h3v3h-3zM36 3h3v3h-3zM39 24h3v3h-3zM54 24h3v3h-3zM36 30h3v3h-3zM6 33h3v3h-3zM0 39h3v3h-3zM63 42h3v3h-3zM54 48h3v3h-3zM42 57h3v3h-3zM0 66h3v3h-3z"/><path fill="rgb(255,255,255)" d="M9 15h3v3h-3z"/></pattern>
<clipPath id="mc"><path d="M905 150h18v3h-18zM896 153h27v3h-27zM887 156h36v3h-36zM878 159h42v3h-42zM875 162h42v3h-42zM872 165h42v3h-42zM869 168h42v3h-42zM869 171h39v3h-39zM866 174h39v3h-39zM863 177h42v3h-42zM860 180h42v3h-42zM860 183h39v3h-39zM857 186h42v3h-42zM857 189h42v3h-42zM854 192h42v3h-42zM848 195h48v3h-48zM845 198h48v3h-48zM842 201h51v3h-51zM836 204h57v3h-57zM827 207h63v3h-63zM818 210h72v3h-72zM812 213h78v3h-78zM809 216h81v3h-81zM806 219h81v3h-81zM803 222h84v3h-84zM800 225h87v3h-87zM797 228h90v3h-90zM794 231h93v3h-93zM791 234h96v3h-96zM788 237h96v3h-96zM785 240h99v3h-99zM782 243h99v3h-99zM779 246h99v3h-99zM779 249h96v3h-96zM776 252h96v3h-96zM776 255h96v3h-96zM776 258h90v3h-90zM773 261h87v3h-87zM770 264h90v3h-90zM770 267h90v3h-90zM767 270h90v3h-90zM764 273h93v3h-93zM764 276h93v3h-93zM764 279h90v3h-90zM761 282h93v3h-93zM761 285h90v3h-90zM761 288h90v3h-90zM758 291h90v3h-90zM755 294h93v3h-93zM755 297h93v3h-93zM752 300h93v3h-93zM749 303h96v3h-96zM743 306h99v3h-99zM740 309h102v3h-102zM734 312h108v3h-108zM731 315h111v3h-111zM728 318h111v3h-111zM725 321h114v3h-114zM722 324h114v3h-114zM719 327h117v3h-117zM716 330h117v3h-117zM716 333h114v3h-114zM713 336h117v3h-117zM713 339h114v3h-114zM710 342h117v3h-117zM710 345h114v3h-114zM707 348h117v3h-117zM704 351h120v3h-120zM701 354h120v3h-120zM698 357h120v3h-120zM692 360h126v3h-126zM692 363h123v3h-123zM689 366h123v3h-123zM689 369h123v3h-123zM689 372h120v3h-120zM686 375h123v3h-123zM686 378h120v3h-120zM686 381h120v3h-120zM686 384h120v3h-120zM686 387h117v3h-117zM683 390h120v3h-120zM683 393h120v3h-120zM683 396h117v3h-117zM683 399h117v3h-117zM683 402h117v3h-117zM683 405h117v3h-117zM683 408h117v3h-117zM683 411h114v3h-114zM683 414h111v3h-111zM683 417h111v3h-111zM683 420h108v3h-108zM683 423h108v3h-108zM683 426h108v3h-108zM680 429h108v3h-108zM680 432h108v3h-108zM680 435h105v3h-105zM680 438h105v3h-105zM677 441h108v3h-108zM677 444h105v3h-105zM677 447h105v3h-105zM674 450h105v3h-105zM674 453h102v3h-102zM674 456h99v3h-99zM671 459h99v3h-99zM671 462h96v3h-96zM668 465h99v3h-99zM662 468h102v3h-102zM656 471h105v3h-105zM650 474h108v3h-108zM647 477h108v3h-108zM641 480h114v3h-114zM638 483h114v3h-114zM632 486h117v3h-117zM629 489h120v3h-120zM623 492h123v3h-123zM620 495h123v3h-123zM617 498h126v3h-126zM614 501h126v3h-126zM611 504h129v3h-129zM611 507h126v3h-126zM611 510h126v3h-126zM608 513h126v3h-126zM608 516h126v3h-126zM605 519h132v3h-132zM602 522h138v3h-138zM602 525h138v3h-138zM596 528h144v3h-144zM593 531h147v3h-147zM587 534h153v3h-153zM584 537h156v3h-156zM584 540h156v3h-156zM581 543h162v3h-162zM581 546h162v3h-162zM581 549h162v3h-162zM581 552h162v3h-162zM581 555h162v3h-162zM581 558h162v3h-162zM581 561h162v3h-162zM581 564h162v3h-162zM581 567h165v3h-165zM581 570h165v3h-165zM581 573h165v3h-165zM578 576h168v3h-168zM578 579h165v3h-165zM578 582h165v3h-165zM578 585h165v3h-165zM578 588h165v3h-165zM575 591h168v3h-168zM575 594h168v3h-168zM575 597h165v3h-165zM572 600h168v3h-168zM572 603h165v3h-165zM569 606h168v3h-168zM566 609h168v3h-168zM563 612h168v3h-168zM563 615h168v3h-168zM560 618h171v3h-171zM557 621h171v3h-171zM557 624h171v3h-171zM554 627h174v3h-174zM551 630h174v3h-174zM548 633h177v3h-177zM548 636h177v3h-177zM545 639h180v3h-180zM545 642h180v3h-180zM542 645h183v3h-183zM542 648h183v3h-183zM539 651h183v3h-183zM539 654h180v3h-180zM536 657h183v3h-183zM533 660h183v3h-183zM533 663h180v3h-180zM533 666h177v3h-177zM533 669h21v3h-21zM566 669h141v3h-141zM536 672h15v3h-15zM575 672h126v3h-126zM542 675h6v3h-6zM581 675h120v3h-120zM584 678h117v3h-117zM587 681h114v3h-114zM590 684h111v3h-111zM590 687h111v3h-111zM593 690h108v3h-108zM596 693h105v3h-105zM596 696h105v3h-105zM599 699h102v3h-102zM602 702h96v3h-96zM602 705h96v3h-96zM605 708h93v3h-93zM605 711h93v3h-93zM608 714h90v3h-90zM608 717h87v3h-87zM611 720h84v3h-84zM617 723h78v3h-78zM620 726h72v3h-72zM623 729h69v3h-69zM626 732h66v3h-66zM629 735h60v3h-60zM632 738h57v3h-57zM635 741h51v3h-51zM641 744h42v3h-42zM644 747h24v3h-24zM647 750h15v3h-15zM647 753h12v3h-12zM650 756h6v3h-6zM650 759h3v3h-3z"/></clipPath>
<filter id="nz" x="520" y="140" width="420" height="630" filterUnits="userSpaceOnUse" color-interpolation-filters="sRGB">
<feTurbulence type="fractalNoise" baseFrequency="0.08" numOctaves="2" seed="11"/>
<feColorMatrix type="matrix" values="1.6 0 0 0 -0.3  1.6 0 0 0 -0.3  1.6 0 0 0 -0.3  0 0 0 0 1"/>
</filter>
<filter id="nzd" x="760" y="140" width="180" height="200" filterUnits="userSpaceOnUse" color-interpolation-filters="sRGB">
<feTurbulence type="fractalNoise" baseFrequency="0.25" numOctaves="2" seed="5"/>
<feColorMatrix type="matrix" values="0 0 0 0 0  0 0 0 0 0  0 0 0 0 0  -3 0 0 0 1.9"/>
</filter>
<mask id="nem" maskUnits="userSpaceOnUse" x="520" y="140" width="420" height="630"><polygon filter="url(#bl8)" fill="#fff" points="930,140 900,150 860,170 830,200 790,225 770,260 765,290 800,300 835,292 862,275 890,240 905,190"/><polygon filter="url(#bl3)" fill="#000" points="852,200 836,226 818,252 802,280 796,292 784,310 770,318 745,324 750,305 766,287 784,262 804,238 826,214"/></mask>
<mask id="lom" maskUnits="userSpaceOnUse" x="520" y="140" width="420" height="630"><polygon filter="url(#bl20)" fill="#fff" points="600,540 690,570 760,560 760,800 500,800 500,620"/></mask>
<filter id="nz2" x="520" y="480" width="240" height="290" filterUnits="userSpaceOnUse" color-interpolation-filters="sRGB">
<feTurbulence type="fractalNoise" baseFrequency="0.16" numOctaves="2" seed="23"/>
<feColorMatrix type="matrix" values="1.5 0 0 0 -0.25  1.5 0 0 0 -0.25  1.5 0 0 0 -0.25  0 0 0 0 1"/>
</filter>
<filter id="bl5" x="-50%" y="-50%" width="200%" height="200%"><feGaussianBlur stdDeviation="5"/></filter><filter id="bl7" x="-50%" y="-50%" width="200%" height="200%"><feGaussianBlur stdDeviation="7"/></filter><filter id="bl10" x="-50%" y="-50%" width="200%" height="200%"><feGaussianBlur stdDeviation="10"/></filter><filter id="bl12" x="-50%" y="-50%" width="200%" height="200%"><feGaussianBlur stdDeviation="12"/></filter><filter id="bl14" x="-50%" y="-50%" width="200%" height="200%"><feGaussianBlur stdDeviation="14"/></filter>
<linearGradient id="bandg" gradientUnits="userSpaceOnUse" x1="760" y1="320" x2="850" y2="200"><stop offset="0" stop-color="#747474"/><stop offset="0.5" stop-color="#6a6a6a"/><stop offset="1" stop-color="#4a4a4a"/></linearGradient>
<filter id="bl20" x="-50%" y="-50%" width="200%" height="200%"><feGaussianBlur stdDeviation="20"/></filter><filter id="bl1" x="-50%" y="-50%" width="200%" height="200%"><feGaussianBlur stdDeviation="1"/></filter>
<filter id="bl2" x="-50%" y="-50%" width="200%" height="200%"><feGaussianBlur stdDeviation="2"/></filter>
<filter id="bl3" x="-50%" y="-50%" width="200%" height="200%"><feGaussianBlur stdDeviation="3"/></filter>
<filter id="bl4" x="-50%" y="-50%" width="200%" height="200%"><feGaussianBlur stdDeviation="4"/></filter>
<filter id="bl6" x="-50%" y="-50%" width="200%" height="200%"><feGaussianBlur stdDeviation="6"/></filter>
<filter id="bl8" x="-50%" y="-50%" width="200%" height="200%"><feGaussianBlur stdDeviation="8"/></filter>
</defs>
<g clip-path="url(#mc)">
<rect x="520" y="140" width="420" height="630" fill="#626262"/>
<polygon filter="url(#bl10)" fill="#6c6c6c" points="800,230 850,200 820,260 790,300 760,350 735,420 715,480 700,520 686,560 640,560 600,540 620,500 660,470 680,420 690,360 740,300"/>
<polygon filter="url(#bl10)" fill="#575757" points="845,255 890,230 850,310 815,370 795,420 760,480 720,530 690,570 686,560 700,520 715,480 735,420 760,350 790,300"/>
<polygon filter="url(#bl8)" fill="#5e5e5e" points="600,530 690,560 745,560 745,640 705,740 650,765 600,710 560,660 580,600"/>
<polygon filter="url(#bl8)" fill="#7e7e7e" points="580,540 620,540 640,600 600,660 545,675 560,620"/>
<polygon filter="url(#bl4)" fill="#909090" points="535,660 555,645 575,660 560,680 540,678"/>
<polygon filter="url(#bl10)" fill="#575757" points="680,550 745,560 745,650 715,690 670,690 665,620"/>
<polygon filter="url(#bl6)" fill="#303030" points="925,145 905,148 870,165 850,200 815,215 790,240 775,265 800,270 830,250 845,275 870,262 892,230 900,180"/>
<polygon filter="url(#bl3)" fill="#1c1c1c" points="925,145 895,150 880,170 900,175 915,160"/>
<polygon filter="url(#bl7)" fill="#3c3c3c" points="850,250 890,230 872,270 850,300 838,330 812,340 820,300"/>
<polygon filter="url(#bl3)" fill="url(#bandg)" points="852,200 836,226 818,252 802,280 796,292 784,310 770,318 745,324 750,305 766,287 784,262 804,238 826,214"/>
<polyline filter="url(#bl2)" opacity="0.6" fill="none" stroke="#303030" stroke-width="3" stroke-linecap="round" stroke-linejoin="round" points="856,198 838,226 820,252 804,280 798,292 784,310 770,318"/>
<polyline filter="url(#bl3)" fill="none" stroke="#767676" stroke-width="9" stroke-linecap="round" stroke-linejoin="round" points="765,300 795,270 830,235"/>
<polyline filter="url(#bl2)" opacity="0.85" fill="none" stroke="#6e6e6e" stroke-width="6" stroke-linecap="round" stroke-linejoin="round" points="792,292 818,258 840,230 860,196 872,175"/>
<polyline filter="url(#bl2)" opacity="0.7" fill="none" stroke="#5a5a5a" stroke-width="4" stroke-linecap="round" stroke-linejoin="round" points="815,300 845,262 865,225"/>
<polyline filter="url(#bl3)" opacity="0.7" fill="none" stroke="#909090" stroke-width="5" stroke-linecap="round" stroke-linejoin="round" points="745,330 730,380 720,420"/>
<polyline filter="url(#bl3)" opacity="0.9" fill="none" stroke="#4a4a4a" stroke-width="5" stroke-linecap="round" stroke-linejoin="round" points="772,318 752,368 735,422 722,470 705,505 690,540 682,575"/>
<polygon filter="url(#bl8)" fill="#585858" points="712,455 750,470 780,452 745,500 715,535 690,560 700,515"/>
<g mask="url(#nem)"><rect x="760" y="140" width="180" height="200" filter="url(#nzd)" opacity="0.55"/></g>
<rect x="520" y="140" width="420" height="630" fill="url(#bp1)" opacity="0.22" style="mix-blend-mode:overlay"/>
<rect x="520" y="140" width="420" height="630" fill="url(#bp2)" opacity="0.15" style="mix-blend-mode:overlay"/>
<rect x="520" y="140" width="420" height="630" filter="url(#nz)" opacity="0.0" style="mix-blend-mode:overlay"/>
<g mask="url(#lom)"><rect x="520" y="480" width="240" height="290" filter="url(#nz2)" opacity="0.35" style="mix-blend-mode:overlay"/></g>
<circle cx="795" cy="386" r="4" fill="#202020" filter="url(#bl2)"/>
<polyline filter="url(#bl4)" opacity="0.6" fill="none" stroke="#484848" stroke-width="6" stroke-linecap="round" stroke-linejoin="round" points="745,440 728,468 708,498 692,528 684,560 682,585"/>
<circle cx="590" cy="560" r="4" fill="#999" filter="url(#bl2)"/>
<circle cx="586" cy="598" r="5" fill="#9a9a9a" filter="url(#bl2)"/>
<circle cx="572" cy="612" r="4" fill="#8c8c8c" filter="url(#bl2)"/>
<circle cx="548" cy="660" r="6" fill="#9c9c9c" filter="url(#bl2)"/>
<circle cx="612" cy="640" r="4" fill="#8a8a8a" filter="url(#bl2)"/>
<circle cx="640" cy="650" r="3" fill="#909090" filter="url(#bl2)"/>
<circle cx="600" cy="685" r="4" fill="#8a8a8a" filter="url(#bl2)"/>
<circle cx="700" cy="610" r="4" fill="#888" filter="url(#bl2)"/>
<circle cx="725" cy="630" r="3" fill="#8a8a8a" filter="url(#bl2)"/>
<circle cx="655" cy="700" r="3" fill="#959595" filter="url(#bl2)"/>
<circle cx="625" cy="575" r="3" fill="#8a8a8a" filter="url(#bl2)"/>
<circle cx="640" cy="620" r="4" fill="#4a4a4a" filter="url(#bl2)"/>
<circle cx="690" cy="640" r="5" fill="#4a4a4a" filter="url(#bl2)"/>
<circle cx="660" cy="670" r="4" fill="#4a4a4a" filter="url(#bl2)"/>
<circle cx="620" cy="700" r="4" fill="#4a4a4a" filter="url(#bl2)"/>
<circle cx="700" cy="690" r="4" fill="#4a4a4a" filter="url(#bl2)"/>
<circle cx="600" cy="630" r="3" fill="#4a4a4a" filter="url(#bl2)"/>
<polyline filter="url(#bl2)" opacity="0.6" fill="none" stroke="#4e4e4e" stroke-width="5" stroke-linecap="round" stroke-linejoin="round" points="612,500 618,525 622,550 624,575 622,600"/>
<polyline filter="url(#bl2)" fill="none" stroke="#bdbdbd" stroke-width="5" stroke-linecap="round" stroke-linejoin="round" points="636,605 655,602 672,597 686,591"/>
<polyline filter="url(#bl2)" opacity="0.8" fill="none" stroke="#a8a8a8" stroke-width="3" stroke-linecap="round" stroke-linejoin="round" points="590,600 610,610"/>
<polyline filter="url(#bl1)" fill="none" stroke="#111" stroke-width="8" stroke-linecap="round" stroke-linejoin="round" points="600,708 612,722 622,729 634,741 645,751 652,764 662,752"/>
<polygon filter="url(#bl1)" fill="#080808" points="640,745 652,766 662,750"/>
</g>
</svg>
<svg class="a" style="left:11px;top:10px" width="18" height="18" viewBox="0 0 18 18">
<path d="M9.5 15.8 A6.6 6.6 0 1 1 15.6 10.5" fill="none" stroke="#7aa320" stroke-width="3"/>
<path d="M8.5 8.5 L14.5 15" stroke="#8ab53a" stroke-width="2.6" stroke-linecap="round"/>
<circle cx="8.3" cy="8.3" r="1.7" fill="#f08a24"/>
</svg>
<div class="t" style="left:34px;top:13px;letter-spacing:-0.2px">*sigugr — QGIS</div>
<div class="a" style="left:1082px;top:19px;width:11px;height:1px;background:#1a1a1a"></div>
<div class="a" style="left:1128px;top:14px;width:10px;height:10px;border:1px solid #1a1a1a;border-radius:1.5px"></div>
<svg class="a" style="left:1173px;top:13px" width="12" height="12" viewBox="0 0 12 12"><path d="M1 1L11 11M11 1L1 11" stroke="#1a1a1a" stroke-width="1.1"/></svg>
<div class="t" style="left:14px;top:38px">Pro<u>y</u>ecto</div>
<div class="t" style="left:75.5px;top:38px"><u>E</u>dición</div>
<div class="t" style="left:127px;top:38px"><u>V</u>er</div>
<div class="t" style="left:158.5px;top:38px"><u>C</u>apa</div>
<div class="t" style="left:199px;top:38px">Con<u>f</u>iguración</div>
<div class="t" style="left:289px;top:38px">Co<u>m</u>plementos</div>
<div class="t" style="left:385px;top:38px">Vect<u>o</u>rial</div>
<div class="t" style="left:444px;top:38px"><u>R</u>áster</div>
<div class="t" style="left:490px;top:38px;letter-spacing:-0.35px">Base de <u>d</u>atos</div>
<div class="t" style="left:575.5px;top:38px"><u>W</u>eb</div>
<div class="t" style="left:614px;top:38px"><u>M</u>alla</div>
<div class="t" style="left:657px;top:38px;letter-spacing:-0.3px">Pro<u>c</u>esos</div>
<div class="t" style="left:717.5px;top:38px">A<u>y</u>uda</div>
<div class="a" style="left:9.5px;top:66.5px;width:1px;height:1px;background:#b9b9b9"></div><div class="a" style="left:12.5px;top:66.5px;width:1px;height:1px;background:#b9b9b9"></div><div class="a" style="left:9.5px;top:69.5px;width:1px;height:1px;background:#b9b9b9"></div><div class="a" style="left:12.5px;top:69.5px;width:1px;height:1px;background:#b9b9b9"></div><div class="a" style="left:9.5px;top:72.5px;width:1px;height:1px;background:#b9b9b9"></div><div class="a" style="left:12.5px;top:72.5px;width:1px;height:1px;background:#b9b9b9"></div><div class="a" style="left:9.5px;top:75.5px;width:1px;height:1px;background:#b9b9b9"></div><div class="a" style="left:12.5px;top:75.5px;width:1px;height:1px;background:#b9b9b9"></div><div class="a" style="left:9.5px;top:78.5px;width:1px;height:1px;background:#b9b9b9"></div><div class="a" style="left:12.5px;top:78.5px;width:1px;height:1px;background:#b9b9b9"></div><div class="a" style="left:9.5px;top:81.5px;width:1px;height:1px;background:#b9b9b9"></div><div class="a" style="left:12.5px;top:81.5px;width:1px;height:1px;background:#b9b9b9"></div>
<svg class="a" style="left:21.0px;top:61.5px" width="24" height="24" viewBox="0 0 24 24"><path d="M4.5 1.5H15L19.5 6V23H4.5Z" fill="#fff" stroke="#707070" stroke-width="1.1"/><path d="M14.5 1.5V6.5H19.5" fill="none" stroke="#707070" stroke-width="1"/></svg>
<svg class="a" style="left:54.0px;top:61.5px" width="24" height="24" viewBox="0 0 24 24"><path d="M1.5 5.5H8.5L10 7.5H19.5V20.5H1.5Z" fill="#f2c94c" stroke="#c9a526"/><path d="M4.5 10.5H23L20 20.5H1.5Z" fill="#fbde5a" stroke="#c9a526"/></svg>
<svg class="a" style="left:87.0px;top:61.5px" width="24" height="24" viewBox="0 0 24 24"><rect x="2.5" y="2.5" width="19.5" height="20" rx="2" fill="#5b8ac6" stroke="#3d679c"/><rect x="5.5" y="3" width="13" height="8" fill="#f4f4f4"/><path d="M7 5.5H17M7 7.5H17M7 9.5H17" stroke="#777" stroke-width="0.8"/><rect x="7" y="15" width="10" height="7" fill="#e8e8e8"/><rect x="8.5" y="16.5" width="3" height="4" fill="#3d679c"/></svg>
<svg class="a" style="left:120.0px;top:61.5px" width="24" height="24" viewBox="0 0 24 24"><path d="M3.5 2.5H18L22 6.5V22.5H3.5Z" fill="#fff" stroke="#777"/><rect x="6" y="6" width="13" height="14" fill="none" stroke="#9ab8e0" stroke-width="0.8"/><path d="M3.5 2.5H12V7.5H8V22.5H3.5Z" fill="#f7d54a" stroke="#c9a526" stroke-width="0.8"/><rect x="14" y="14.5" width="9.5" height="9.5" rx="2" fill="#c9a200"/><path d="M18.75 19.25L18.75 15.83M18.75 19.25L21.71 17.54M18.75 19.25L21.71 20.96M18.75 19.25L18.75 22.67M18.75 19.25L15.79 20.96M18.75 19.25L15.79 17.54" stroke="#fff" stroke-width="1.2" stroke-linecap="round"/><polygon points="19.80,17.43 20.85,19.25 19.80,21.07 17.70,21.07 16.65,19.25 17.70,17.43" fill="#c9a200" stroke="#fff" stroke-width="1.1"/></svg>
<svg class="a" style="left:153.0px;top:61.5px" width="24" height="24" viewBox="0 0 24 24"><path d="M2.5 2.5H17L21.5 7V22.5H2.5Z" fill="#fff" stroke="#777"/><rect x="5" y="5" width="13" height="14" fill="none" stroke="#9ab8e0" stroke-width="0.8"/><path d="M7.5 9.5A3.5 3.5 0 0 1 13 7L11 9.5L12.5 11L15 9A3.5 3.5 0 0 1 12.5 14.5Z" fill="#f0f0f0" stroke="#555" stroke-width="1"/><path d="M12 13L21 22" stroke="#555" stroke-width="3.2" stroke-linecap="round"/><path d="M12.5 13.5L20.5 21.5" stroke="#f0d060" stroke-width="1.8" stroke-linecap="round"/></svg>
<svg class="a" style="left:186.0px;top:61.5px" width="24" height="24" viewBox="0 0 24 24"><circle cx="6.5" cy="7" r="4.6" fill="#d9622b"/><path d="M13.5 11.5L21 4" stroke="#5b8ac6" stroke-width="2.6" stroke-linecap="round"/><rect x="2" y="13.5" width="9" height="9" fill="#6aa56d" stroke="#4d8050" stroke-width="0.8"/><text x="13" y="22" font-family="Liberation Sans" font-size="11" fill="#444">a</text></svg>
<div class="a" style="left:223.5px;top:66.5px;width:1px;height:1px;background:#b9b9b9"></div><div class="a" style="left:226.5px;top:66.5px;width:1px;height:1px;background:#b9b9b9"></div><div class="a" style="left:223.5px;top:69.5px;width:1px;height:1px;background:#b9b9b9"></div><div class="a" style="left:226.5px;top:69.5px;width:1px;height:1px;background:#b9b9b9"></div><div class="a" style="left:223.5px;top:72.5px;width:1px;height:1px;background:#b9b9b9"></div><div class="a" style="left:226.5px;top:72.5px;width:1px;height:1px;background:#b9b9b9"></div><div class="a" style="left:223.5px;top:75.5px;width:1px;height:1px;background:#b9b9b9"></div><div class="a" style="left:226.5px;top:75.5px;width:1px;height:1px;background:#b9b9b9"></div><div class="a" style="left:223.5px;top:78.5px;width:1px;height:1px;background:#b9b9b9"></div><div class="a" style="left:226.5px;top:78.5px;width:1px;height:1px;background:#b9b9b9"></div><div class="a" style="left:223.5px;top:81.5px;width:1px;height:1px;background:#b9b9b9"></div><div class="a" style="left:226.5px;top:81.5px;width:1px;height:1px;background:#b9b9b9"></div>
<div class="a" style="left:231px;top:59px;width:32px;height:31px;background:#dcdcdc;border:1px solid #bcbcbc;border-radius:3px"></div>
<svg class="a" style="left:235.0px;top:61.5px" width="24" height="24" viewBox="0 0 24 24"><path d="M7.2 22.5C6 20 4.5 18 3 15.3C2.3 14 3.3 12.5 4.8 13.2L7.2 15V5A1.2 1.2 0 0 1 9.6 5V12V3.2A1.2 1.2 0 0 1 12 3.2V12V3.8A1.2 1.2 0 0 1 14.4 3.8V12V6A1.2 1.2 0 0 1 16.8 6V15.5C16.8 18 16.2 20 15.2 22.5Z" fill="#fff" stroke="#1e1e1e" stroke-width="1.1" stroke-linejoin="round"/></svg>
<svg class="a" style="left:268.0px;top:61.5px" width="24" height="24" viewBox="0 0 24 24"><rect x="4" y="5" width="14" height="13" fill="#fbde5a" stroke="#c9a526"/><g fill="#5b8ac6" stroke="#3d679c" stroke-width="0.6"><path d="M11 1L15 5.5H13V9H9V5.5H7Z"/><path d="M11 23L7 18.5H9V15H13V18.5H15Z"/><path d="M1 12L5.5 8V10H9V14H5.5V16Z"/><path d="M22 12L17.5 16V14H14V10H17.5V8Z"/></g></svg>
<svg class="a" style="left:301.0px;top:61.5px" width="24" height="24" viewBox="0 0 24 24"><path d="M9 14L2.5 21" stroke="#222" stroke-width="3.6" stroke-linecap="round"/><path d="M8.5 14.5L3 20" stroke="#f2c230" stroke-width="2" stroke-linecap="round"/><circle cx="14.5" cy="9.5" r="7.8" fill="#eeeeee" stroke="#555" stroke-width="1.1"/><path d="M14.5 5.5V13.5M10.5 9.5H18.5" stroke="#5b8ac6" stroke-width="2.2"/></svg>
<svg class="a" style="left:334.0px;top:61.5px" width="24" height="24" viewBox="0 0 24 24"><path d="M9 14L2.5 21" stroke="#222" stroke-width="3.6" stroke-linecap="round"/><path d="M8.5 14.5L3 20" stroke="#f2c230" stroke-width="2" stroke-linecap="round"/><circle cx="14.5" cy="9.5" r="7.8" fill="#eeeeee" stroke="#555" stroke-width="1.1"/><path d="M10.5 9.5H18.5" stroke="#5b8ac6" stroke-width="2.2"/></svg>
<svg class="a" style="left:367.0px;top:61.5px" width="24" height="24" viewBox="0 0 24 24"><g fill="#5b8ac6" stroke="#4670a8" stroke-width="0.5"><path d="M1 1H8.5L6.5 3L9 5.5L5.5 9L3 6.5L1 8.5Z"/><path d="M23 1H15.5L17.5 3L15 5.5L18.5 9L21 6.5L23 8.5Z"/><path d="M23 23H15.5L17.5 21L15 18.5L18.5 15L21 17.5L23 15.5Z"/></g><path d="M7 16L2.5 21" stroke="#222" stroke-width="3.6" stroke-linecap="round"/><path d="M6.5 16.5L3 20" stroke="#f2c230" stroke-width="2" stroke-linecap="round"/><circle cx="12" cy="12" r="6.8" fill="#e8e8e8" stroke="#555" stroke-width="1.1"/></svg>
<svg class="a" style="left:400.0px;top:61.5px" width="24" height="24" viewBox="0 0 24 24"><rect x="2" y="3" width="9" height="12" fill="#fbde5a" stroke="#c9a526"/><path d="M9 14L2.5 21" stroke="#222" stroke-width="3.6" stroke-linecap="round"/><path d="M8.5 14.5L3 20" stroke="#f2c230" stroke-width="2" stroke-linecap="round"/><circle cx="14.5" cy="9.5" r="7.8" fill="#f2f2ea" stroke="#555" stroke-width="1.1"/><path d="M14.5 2V17" stroke="#ccc" stroke-width="0.8"/></svg>
<svg class="a" style="left:433.0px;top:61.5px" width="24" height="24" viewBox="0 0 24 24"><rect x="2" y="3" width="9" height="12" fill="#eee" stroke="#888"/><path d="M9 14L2.5 21" stroke="#222" stroke-width="3.6" stroke-linecap="round"/><path d="M8.5 14.5L3 20" stroke="#f2c230" stroke-width="2" stroke-linecap="round"/><circle cx="14.5" cy="9.5" r="7.8" fill="#efefef" stroke="#555" stroke-width="1.1"/><path d="M14.5 2V17" stroke="#ccc" stroke-width="0.8"/></svg>
<svg class="a" style="left:466.0px;top:61.5px" width="24" height="24" viewBox="0 0 24 24"><rect x="2" y="3" width="9" height="12" fill="#eee" stroke="#888"/><path d="M9 14L2.5 21" stroke="#222" stroke-width="3.6" stroke-linecap="round"/><path d="M8.5 14.5L3 20" stroke="#f2c230" stroke-width="2" stroke-linecap="round"/><circle cx="14.5" cy="9.5" r="7.8" fill="#efefef" stroke="#555" stroke-width="1.1"/><text x="8.6" y="13.5" font-family="Liberation Sans" font-weight="bold" font-size="9" fill="#222">1:1</text></svg>
<svg class="a" style="left:499.0px;top:61.5px" width="24" height="24" viewBox="0 0 24 24"><path d="M9 14L2.5 21" stroke="#222" stroke-width="3.6" stroke-linecap="round"/><path d="M8.5 14.5L3 20" stroke="#f2c230" stroke-width="2" stroke-linecap="round"/><circle cx="14.5" cy="9.5" r="7.8" fill="#efefef" stroke="#555" stroke-width="1.1"/><rect x="13" y="13" width="10" height="10" fill="#5b8ac6" stroke="#3d679c" stroke-width="0.6"/><path d="M20 15L16 18L20 21" fill="none" stroke="#fff" stroke-width="1.6"/></svg>
<svg class="a" style="left:532.0px;top:61.5px" width="24" height="24" viewBox="0 0 24 24"><g opacity="0.45"><path d="M9 14L2.5 21" stroke="#222" stroke-width="3.6" stroke-linecap="round"/><path d="M8.5 14.5L3 20" stroke="#f2c230" stroke-width="2" stroke-linecap="round"/><circle cx="14.5" cy="9.5" r="7.8" fill="#f2f2f2" stroke="#555" stroke-width="1.1"/><rect x="13" y="13" width="10" height="10" fill="#bbb"/><path d="M16 15L20 18L16 21" fill="none" stroke="#fff" stroke-width="1.6"/></g></svg>
<svg class="a" style="left:565.0px;top:61.5px" width="24" height="24" viewBox="0 0 24 24"><path d="M5 3H20V22H5C3.5 22 3 21 3 20V5C3 3.5 4 3 5 3Z" fill="#eee" stroke="#888"/><path d="M5 3V20C5 21 4 22 3 21" fill="#ddd" stroke="#888" stroke-width="0.8"/><rect x="14" y="14.5" width="9.5" height="9.5" rx="2" fill="#c9a200"/><path d="M18.75 19.25L18.75 15.83M18.75 19.25L21.71 17.54M18.75 19.25L21.71 20.96M18.75 19.25L18.75 22.67M18.75 19.25L15.79 20.96M18.75 19.25L15.79 17.54" stroke="#fff" stroke-width="1.2" stroke-linecap="round"/><polygon points="19.80,17.43 20.85,19.25 19.80,21.07 17.70,21.07 16.65,19.25 17.70,17.43" fill="#c9a200" stroke="#fff" stroke-width="1.1"/></svg>
<svg class="a" style="left:598.0px;top:61.5px" width="24" height="24" viewBox="0 0 24 24"><path d="M3 8L10 4L21 6L20 17L12 19L4 15Z" fill="#e4e4e4" stroke="#999" stroke-width="0.8"/><path d="M5 10L20 9M6 13L19 13M9 5L9 17M15 5L14 18" stroke="#bbb" stroke-width="0.7"/><rect x="14" y="14.5" width="9.5" height="9.5" rx="2" fill="#c9a200"/><path d="M18.75 19.25L18.75 15.83M18.75 19.25L21.71 17.54M18.75 19.25L21.71 20.96M18.75 19.25L18.75 22.67M18.75 19.25L15.79 20.96M18.75 19.25L15.79 17.54" stroke="#fff" stroke-width="1.2" stroke-linecap="round"/><polygon points="19.80,17.43 20.85,19.25 19.80,21.07 17.70,21.07 16.65,19.25 17.70,17.43" fill="#c9a200" stroke="#fff" stroke-width="1.1"/></svg>
<svg class="a" style="left:633.0px;top:61.5px" width="24" height="24" viewBox="0 0 24 24"><path d="M6 2H15V18L11 14L6 21Z" fill="#5b8ac6" stroke="#3d679c"/><rect x="14" y="14.5" width="9.5" height="9.5" rx="2" fill="#c9a200"/><path d="M18.75 19.25L18.75 15.83M18.75 19.25L21.71 17.54M18.75 19.25L21.71 20.96M18.75 19.25L18.75 22.67M18.75 19.25L15.79 20.96M18.75 19.25L15.79 17.54" stroke="#fff" stroke-width="1.2" stroke-linecap="round"/><polygon points="19.80,17.43 20.85,19.25 19.80,21.07 17.70,21.07 16.65,19.25 17.70,17.43" fill="#c9a200" stroke="#fff" stroke-width="1.1"/></svg>
<svg class="a" style="left:664.0px;top:61.5px" width="24" height="24" viewBox="0 0 24 24"><path d="M4 3H20V22H5C3.5 22 3 21 3 20V5Z" fill="#eee" stroke="#888"/><path d="M5 3V20" stroke="#aaa"/><path d="M13 1H17V9L15 7L13 9Z" fill="#5b8ac6" stroke="#3d679c" stroke-width="0.7"/></svg>
<svg class="a" style="left:697.0px;top:61.5px" width="24" height="24" viewBox="0 0 24 24"><circle cx="12" cy="12" r="10.2" fill="#fafafa" stroke="#333" stroke-width="1.1"/><path d="M12 5.5V12.5L16.5 15" fill="none" stroke="#333" stroke-width="1.3"/><circle cx="20.50" cy="12.00" r="0.55" fill="#5b8ac6"/><circle cx="19.36" cy="16.25" r="0.55" fill="#5b8ac6"/><circle cx="16.25" cy="19.36" r="0.55" fill="#5b8ac6"/><circle cx="12.00" cy="20.50" r="0.55" fill="#5b8ac6"/><circle cx="7.75" cy="19.36" r="0.55" fill="#5b8ac6"/><circle cx="4.64" cy="16.25" r="0.55" fill="#5b8ac6"/><circle cx="3.50" cy="12.00" r="0.55" fill="#5b8ac6"/><circle cx="4.64" cy="7.75" r="0.55" fill="#5b8ac6"/><circle cx="7.75" cy="4.64" r="0.55" fill="#5b8ac6"/><circle cx="12.00" cy="3.50" r="0.55" fill="#5b8ac6"/><circle cx="16.25" cy="4.64" r="0.55" fill="#5b8ac6"/><circle cx="19.36" cy="7.75" r="0.55" fill="#5b8ac6"/></svg>
<svg class="a" style="left:729.0px;top:61.5px" width="24" height="24" viewBox="0 0 24 24"><path d="M3 11A9 8 0 0 1 18 5L20.5 2.5V10.5H12.5L15.5 7.5A6 5.5 0 0 0 6.5 11Z" fill="#5b8ac6" stroke="#4a7ab8" stroke-width="0.5"/><path d="M21 13A9 8 0 0 1 6 19L3.5 21.5V13.5H11.5L8.5 16.5A6 5.5 0 0 0 17.5 13Z" fill="#5b8ac6" stroke="#4a7ab8" stroke-width="0.5"/></svg>
<div class="a" style="left:766.5px;top:66.5px;width:1px;height:1px;background:#b9b9b9"></div><div class="a" style="left:769.5px;top:66.5px;width:1px;height:1px;background:#b9b9b9"></div><div class="a" style="left:766.5px;top:69.5px;width:1px;height:1px;background:#b9b9b9"></div><div class="a" style="left:769.5px;top:69.5px;width:1px;height:1px;background:#b9b9b9"></div><div class="a" style="left:766.5px;top:72.5px;width:1px;height:1px;background:#b9b9b9"></div><div class="a" style="left:769.5px;top:72.5px;width:1px;height:1px;background:#b9b9b9"></div><div class="a" style="left:766.5px;top:75.5px;width:1px;height:1px;background:#b9b9b9"></div><div class="a" style="left:769.5px;top:75.5px;width:1px;height:1px;background:#b9b9b9"></div><div class="a" style="left:766.5px;top:78.5px;width:1px;height:1px;background:#b9b9b9"></div><div class="a" style="left:769.5px;top:78.5px;width:1px;height:1px;background:#b9b9b9"></div><div class="a" style="left:766.5px;top:81.5px;width:1px;height:1px;background:#b9b9b9"></div><div class="a" style="left:769.5px;top:81.5px;width:1px;height:1px;background:#b9b9b9"></div>
<svg class="a" style="left:778.0px;top:61.5px" width="24" height="24" viewBox="0 0 24 24"><rect x="1.5" y="1.5" width="21" height="20" fill="#f2f2f0" stroke="#b0b0b0" stroke-dasharray="1.3 1.3" stroke-width="0.9"/><rect x="2.5" y="2.5" width="14" height="13" fill="#e3e1da" stroke="#cfcdc6" stroke-width="0.6"/><path d="M10 9.5L10.5 21.5L13.5 18.5L16.5 23.5L18.5 22.5L15.5 17.5L20 17Z" fill="#fff" stroke="#b4b4b4" stroke-width="0.9" stroke-linejoin="round"/></svg>
<svg class="a" style="left:808px;top:71.5px" width="8" height="5" viewBox="0 0 8 5"><path d="M0 0H8L4 4.5Z" fill="#aaa"/></svg>
<svg class="a" style="left:824.0px;top:61.5px" width="24" height="24" viewBox="0 0 24 24"><rect x="9.5" y="9.5" width="13" height="13" fill="#e3e1da" stroke="#d0cec8" stroke-width="0.8"/><rect x="2.5" y="2.5" width="13.5" height="13" fill="#f4f4f4" stroke="#c8c8c8" stroke-width="0.9"/><rect x="4.5" y="5" width="9.5" height="3" fill="none" stroke="#c4c4c4" stroke-width="0.8"/><rect x="4.5" y="10" width="9.5" height="3" fill="none" stroke="#c4c4c4" stroke-width="0.8"/></svg>
<svg class="a" style="left:854px;top:71.5px" width="8" height="5" viewBox="0 0 8 5"><path d="M0 0H8L4 4.5Z" fill="#aaa"/></svg>
<svg class="a" style="left:870.0px;top:61.5px" width="24" height="24" viewBox="0 0 24 24"><rect x="1.5" y="2.5" width="12" height="11" fill="#fbde5a" stroke="#c9a526"/><rect x="6.5" y="7.5" width="12" height="11" fill="#fbde5a" stroke="#c9a526"/><rect x="13" y="14" width="10" height="10" rx="2" fill="#d42a2a"/><circle cx="18" cy="19" r="3" fill="none" stroke="#fff" stroke-width="1.1"/><path d="M16 21L20 17" stroke="#fff" stroke-width="1.1"/></svg>
<svg class="a" style="left:899px;top:71.5px" width="8" height="5" viewBox="0 0 8 5"><path d="M0 0H8L4 4.5Z" fill="#444"/></svg>
<svg class="a" style="left:915.0px;top:61.5px" width="24" height="24" viewBox="0 0 24 24"><rect x="1.5" y="2.5" width="13" height="12" fill="#fbde5a" stroke="#c9a526"/><path d="M18 23C16 19.5 14.5 18 14.5 16A3.5 3.5 0 0 1 21.5 16C21.5 18 20 19.5 18 23Z" fill="#6b8fae" stroke="#4d6f8c" stroke-width="0.6"/><circle cx="18" cy="16" r="1.1" fill="#fff"/></svg>
<svg class="a" style="left:944px;top:71.5px" width="8" height="5" viewBox="0 0 8 5"><path d="M0 0H8L4 4.5Z" fill="#444"/></svg>
<div class="a" style="left:964px;top:66.5px;width:1px;height:1px;background:#b9b9b9"></div><div class="a" style="left:967px;top:66.5px;width:1px;height:1px;background:#b9b9b9"></div><div class="a" style="left:964px;top:69.5px;width:1px;height:1px;background:#b9b9b9"></div><div class="a" style="left:967px;top:69.5px;width:1px;height:1px;background:#b9b9b9"></div><div class="a" style="left:964px;top:72.5px;width:1px;height:1px;background:#b9b9b9"></div><div class="a" style="left:967px;top:72.5px;width:1px;height:1px;background:#b9b9b9"></div><div class="a" style="left:964px;top:75.5px;width:1px;height:1px;background:#b9b9b9"></div><div class="a" style="left:967px;top:75.5px;width:1px;height:1px;background:#b9b9b9"></div><div class="a" style="left:964px;top:78.5px;width:1px;height:1px;background:#b9b9b9"></div><div class="a" style="left:967px;top:78.5px;width:1px;height:1px;background:#b9b9b9"></div><div class="a" style="left:964px;top:81.5px;width:1px;height:1px;background:#b9b9b9"></div><div class="a" style="left:967px;top:81.5px;width:1px;height:1px;background:#b9b9b9"></div>
<svg class="a" style="left:975.0px;top:61.5px" width="24" height="24" viewBox="0 0 24 24"><circle cx="10" cy="10" r="8.6" fill="#5b8ac6" stroke="#4a78b0" stroke-width="0.6"/><text x="7.3" y="15" font-family="Liberation Serif" font-style="italic" font-weight="bold" font-size="12" fill="#fff">i</text><path d="M13 12L13.5 23L16 20.5L18.5 24.5L20.5 23.5L18 19.5L21.5 19Z" fill="#fff" stroke="#333" stroke-width="0.9" stroke-linejoin="round"/></svg>
<svg class="a" style="left:1008.0px;top:61.5px" width="24" height="24" viewBox="0 0 24 24"><rect x="3" y="2" width="18" height="20" fill="none" stroke="#ccc" stroke-width="1"/><path d="M2 22.5H22" stroke="#ccc" stroke-width="1.5"/><path d="M3 6H21M3 11H21M3 16H21" stroke="#d8d8d8" stroke-width="0.8"/><ellipse cx="9" cy="6" rx="2" ry="1.5" fill="none" stroke="#d4c8c8" stroke-width="0.8"/><ellipse cx="15" cy="6" rx="2" ry="1.5" fill="none" stroke="#d4c8c8" stroke-width="0.8"/><ellipse cx="7" cy="11" rx="2" ry="1.5" fill="none" stroke="#d4c8c8" stroke-width="0.8"/><ellipse cx="12" cy="11" rx="2" ry="1.5" fill="none" stroke="#d4c8c8" stroke-width="0.8"/><ellipse cx="7" cy="16" rx="2" ry="1.5" fill="none" stroke="#d4c8c8" stroke-width="0.8"/><ellipse cx="12" cy="16" rx="2" ry="1.5" fill="none" stroke="#d4c8c8" stroke-width="0.8"/><ellipse cx="17" cy="16" rx="2" ry="1.5" fill="none" stroke="#d4c8c8" stroke-width="0.8"/></svg>
<svg class="a" style="left:1041.0px;top:61.5px" width="24" height="24" viewBox="0 0 24 24"><path d="M9.23 5.79 L10.63 4.93 L10.34 1.53 L13.66 1.53 L13.37 4.93 L14.77 5.79 L14.44 5.65 L16.03 6.03 L18.23 3.42 L20.58 5.77 L17.97 7.97 L18.35 9.56 L18.21 9.23 L19.07 10.63 L22.47 10.34 L22.47 13.66 L19.07 13.37 L18.21 14.77 L18.35 14.44 L17.97 16.03 L20.58 18.23 L18.23 20.58 L16.03 17.97 L14.44 18.35 L14.77 18.21 L13.37 19.07 L13.66 22.47 L10.34 22.47 L10.63 19.07 L9.23 18.21 L9.56 18.35 L7.97 17.97 L5.77 20.58 L3.42 18.23 L6.03 16.03 L5.65 14.44 L5.79 14.77 L4.93 13.37 L1.53 13.66 L1.53 10.34 L4.93 10.63 L5.79 9.23 L5.65 9.56 L6.03 7.97 L3.42 5.77 L5.77 3.42 L7.97 6.03 L9.56 5.65Z" fill="#86aade" stroke="#4d7cc0" stroke-width="1.1" stroke-linejoin="round"/><circle cx="12" cy="12" r="3" fill="#fff" stroke="#4d7cc0" stroke-width="1"/></svg>
<svg class="a" style="left:1074.0px;top:61.5px" width="24" height="24" viewBox="0 0 24 24"><path d="M4 2.5H19L19.5 8H18C17.5 5.5 16.5 5 14 5H9L14 12L8.5 19H15C17 19 18 18 18.5 16H20L19 22H3.5V21L10.5 12.5L3.8 3.5Z" fill="#a010a8"/></svg>
<svg class="a" style="left:1107.0px;top:61.5px" width="24" height="24" viewBox="0 0 24 24"><rect x="2.5" y="2.5" width="19" height="20" fill="#f6f6f6" stroke="#cfcfcf"/><path d="M3 6H21" stroke="#ddd" stroke-width="2"/><path d="M5 9.5H8M10 9.5H19M5 12.5H8M10 12.5H19M5 15.5H8M10 15.5H19M5 18.5H8M10 18.5H19M2.5 7.5H21.5" stroke="#d2d2d2" stroke-width="0.8"/></svg>
<svg class="a" style="left:1137px;top:71.5px" width="8" height="5" viewBox="0 0 8 5"><path d="M0 0H8L4 4.5Z" fill="#aaa"/></svg>
<svg class="a" style="left:1188px;top:69.5px" width="10" height="8" viewBox="0 0 10 8"><path d="M1 1L4 4L1 7M5.5 1L8.5 4L5.5 7" fill="none" stroke="#333" stroke-width="1.1"/></svg>
<div class="a" style="left:9.5px;top:105px;width:1px;height:1px;background:#b9b9b9"></div><div class="a" style="left:12.5px;top:105px;width:1px;height:1px;background:#b9b9b9"></div><div class="a" style="left:9.5px;top:108px;width:1px;height:1px;background:#b9b9b9"></div><div class="a" style="left:12.5px;top:108px;width:1px;height:1px;background:#b9b9b9"></div><div class="a" style="left:9.5px;top:111px;width:1px;height:1px;background:#b9b9b9"></div><div class="a" style="left:12.5px;top:111px;width:1px;height:1px;background:#b9b9b9"></div><div class="a" style="left:9.5px;top:114px;width:1px;height:1px;background:#b9b9b9"></div><div class="a" style="left:12.5px;top:114px;width:1px;height:1px;background:#b9b9b9"></div><div class="a" style="left:9.5px;top:117px;width:1px;height:1px;background:#b9b9b9"></div><div class="a" style="left:12.5px;top:117px;width:1px;height:1px;background:#b9b9b9"></div><div class="a" style="left:9.5px;top:120px;width:1px;height:1px;background:#b9b9b9"></div><div class="a" style="left:12.5px;top:120px;width:1px;height:1px;background:#b9b9b9"></div>
<svg class="a" style="left:21.0px;top:100.0px" width="24" height="24" viewBox="0 0 24 24"><path d="M1.5 9L10 6L14 19L5 22Z" fill="#e0723a" stroke="#b85a28" stroke-width="0.6"/><path d="M4 5L12 4L13 17L5 18Z" fill="#f0c435" stroke="#c9a020" stroke-width="0.6"/><path d="M9 2L21 4L19 15L7 13Z" fill="#5b8ac6" stroke="#3d679c" stroke-width="0.7"/><rect x="14" y="14" width="10" height="10" rx="2" fill="#5e9e5e"/><path d="M19 16V22M16 19H22" stroke="#fff" stroke-width="1.8"/></svg>
<svg class="a" style="left:54.0px;top:100.0px" width="24" height="24" viewBox="0 0 24 24"><circle cx="12" cy="8.5" r="7" fill="#a9c4e6" stroke="#5a80b0" stroke-width="0.7"/><path d="M7 5C8.5 4 10 5 10 6.5C9.5 8 8.5 8.5 8.8 10.5C8 11 7 10 6.5 8.5Z M12 3.5C14 3 16 4 17 6C17.5 8 16 9 14.5 8.5C13.5 7.5 12.5 6 12 3.5Z M12.5 9C14 9.5 14.5 11 13.5 13C12.5 13 12 11 12.5 9Z" fill="#35608f"/><path d="M1.5 9.5L12 13V22.5L1.5 18.5Z" fill="#e0b000" stroke="#3a2e00" stroke-width="0.8"/><path d="M12 13L22.5 9.5V18.5L12 22.5Z" fill="#fff27a" stroke="#3a2e00" stroke-width="0.8"/><rect x="14" y="14.5" width="9.5" height="9.5" rx="2" fill="#c9a200"/><path d="M18.75 19.25L18.75 15.83M18.75 19.25L21.71 17.54M18.75 19.25L21.71 20.96M18.75 19.25L18.75 22.67M18.75 19.25L15.79 20.96M18.75 19.25L15.79 17.54" stroke="#fff" stroke-width="1.2" stroke-linecap="round"/><polygon points="19.80,17.43 20.85,19.25 19.80,21.07 17.70,21.07 16.65,19.25 17.70,17.43" fill="#c9a200" stroke="#fff" stroke-width="1.1"/></svg>
<svg class="a" style="left:87.0px;top:100.0px" width="24" height="24" viewBox="0 0 24 24"><path d="M3 3L9.5 19.5L16.5 3L21.5 3" fill="none" stroke="#2d3a48" stroke-width="1.3"/><path d="M3 1.2L4.8 3L3 4.8L1.2 3Z" fill="#fff" stroke="#333" stroke-width="0.8"/><path d="M16.5 1.2L18.3 3L16.5 4.8L14.7 3Z" fill="#fff" stroke="#333" stroke-width="0.8"/><path d="M21.5 1.2L23.3 3L21.5 4.8L19.7 3Z" fill="#fff" stroke="#333" stroke-width="0.8"/><circle cx="9.5" cy="19.5" r="1.6" fill="#fff" stroke="#333" stroke-width="0.9"/><rect x="14" y="14.5" width="9.5" height="9.5" rx="2" fill="#c9a200"/><path d="M18.75 19.25L18.75 15.83M18.75 19.25L21.71 17.54M18.75 19.25L21.71 20.96M18.75 19.25L18.75 22.67M18.75 19.25L15.79 20.96M18.75 19.25L15.79 17.54" stroke="#fff" stroke-width="1.2" stroke-linecap="round"/><polygon points="19.80,17.43 20.85,19.25 19.80,21.07 17.70,21.07 16.65,19.25 17.70,17.43" fill="#c9a200" stroke="#fff" stroke-width="1.1"/></svg>
<svg class="a" style="left:120.0px;top:100.0px" width="24" height="24" viewBox="0 0 24 24"><path d="M21.5 1.5C14 3 7 8 4.5 16L2 22.5L3 22L5.5 17C13 16 19 10 21.5 1.5Z" fill="#5b8ac6" stroke="#3a5f8c" stroke-width="0.8"/><path d="M21 2L4 20" stroke="#dfe8f3" stroke-width="0.7"/><rect x="14" y="14.5" width="9.5" height="9.5" rx="2" fill="#c9a200"/><path d="M18.75 19.25L18.75 15.83M18.75 19.25L21.71 17.54M18.75 19.25L21.71 20.96M18.75 19.25L18.75 22.67M18.75 19.25L15.79 20.96M18.75 19.25L15.79 17.54" stroke="#fff" stroke-width="1.2" stroke-linecap="round"/><polygon points="19.80,17.43 20.85,19.25 19.80,21.07 17.70,21.07 16.65,19.25 17.70,17.43" fill="#c9a200" stroke="#fff" stroke-width="1.1"/></svg>
<svg class="a" style="left:153.0px;top:100.0px" width="24" height="24" viewBox="0 0 24 24"><rect x="2" y="6" width="18" height="11" rx="1.5" fill="#5b8ac6" stroke="#3a5f8c" stroke-width="0.8"/><path d="M5 2.5V6M8 2.5V6M11 2.5V6M14 2.5V6M17 2.5V6M5 17V20.5M8 17V20.5M11 17V20.5" stroke="#333" stroke-width="1"/><rect x="14" y="14.5" width="9.5" height="9.5" rx="2" fill="#c9a200"/><path d="M18.75 19.25L18.75 15.83M18.75 19.25L21.71 17.54M18.75 19.25L21.71 20.96M18.75 19.25L18.75 22.67M18.75 19.25L15.79 20.96M18.75 19.25L15.79 17.54" stroke="#fff" stroke-width="1.2" stroke-linecap="round"/><polygon points="19.80,17.43 20.85,19.25 19.80,21.07 17.70,21.07 16.65,19.25 17.70,17.43" fill="#c9a200" stroke="#fff" stroke-width="1.1"/></svg>
<svg class="a" style="left:186.0px;top:100.0px" width="24" height="24" viewBox="0 0 24 24"><rect x="2" y="2" width="20" height="20" fill="#8fb0d8" stroke="#2f4f78" stroke-width="1.2"/><path d="M12 2V22M2 12H22M2 2L12 12M12 2L2 12M22 2L12 12M2 17H12M7 12V22" stroke="#2f4f78" stroke-width="1"/><rect x="14" y="14.5" width="9.5" height="9.5" rx="2" fill="#c9a200"/><path d="M18.75 19.25L18.75 15.83M18.75 19.25L21.71 17.54M18.75 19.25L21.71 20.96M18.75 19.25L18.75 22.67M18.75 19.25L15.79 20.96M18.75 19.25L15.79 17.54" stroke="#fff" stroke-width="1.2" stroke-linecap="round"/><polygon points="19.80,17.43 20.85,19.25 19.80,21.07 17.70,21.07 16.65,19.25 17.70,17.43" fill="#c9a200" stroke="#fff" stroke-width="1.1"/></svg>
<svg class="a" style="left:219.0px;top:100.0px" width="24" height="24" viewBox="0 0 24 24"><rect x="1.5" y="1.5" width="21" height="21" rx="2" fill="#aac2e0" stroke="#6f8fb8" stroke-width="1"/><path d="M4 3L9.5 17L17 3" fill="none" stroke="#333" stroke-width="1.2"/><circle cx="4" cy="3" r="1.5" fill="#fff" stroke="#333" stroke-width="0.8"/><circle cx="17" cy="3" r="1.5" fill="#fff" stroke="#333" stroke-width="0.8"/><circle cx="9.5" cy="17" r="1.5" fill="#fff" stroke="#333" stroke-width="0.8"/><rect x="14" y="14.5" width="9.5" height="9.5" rx="2" fill="#c9a200"/><path d="M18.75 19.25L18.75 15.83M18.75 19.25L21.71 17.54M18.75 19.25L21.71 20.96M18.75 19.25L18.75 22.67M18.75 19.25L15.79 20.96M18.75 19.25L15.79 17.54" stroke="#fff" stroke-width="1.2" stroke-linecap="round"/><polygon points="19.80,17.43 20.85,19.25 19.80,21.07 17.70,21.07 16.65,19.25 17.70,17.43" fill="#c9a200" stroke="#fff" stroke-width="1.1"/></svg>
<div class="a" style="left:257px;top:105px;width:1px;height:1px;background:#b9b9b9"></div><div class="a" style="left:260px;top:105px;width:1px;height:1px;background:#b9b9b9"></div><div class="a" style="left:257px;top:108px;width:1px;height:1px;background:#b9b9b9"></div><div class="a" style="left:260px;top:108px;width:1px;height:1px;background:#b9b9b9"></div><div class="a" style="left:257px;top:111px;width:1px;height:1px;background:#b9b9b9"></div><div class="a" style="left:260px;top:111px;width:1px;height:1px;background:#b9b9b9"></div><div class="a" style="left:257px;top:114px;width:1px;height:1px;background:#b9b9b9"></div><div class="a" style="left:260px;top:114px;width:1px;height:1px;background:#b9b9b9"></div><div class="a" style="left:257px;top:117px;width:1px;height:1px;background:#b9b9b9"></div><div class="a" style="left:260px;top:117px;width:1px;height:1px;background:#b9b9b9"></div><div class="a" style="left:257px;top:120px;width:1px;height:1px;background:#b9b9b9"></div><div class="a" style="left:260px;top:120px;width:1px;height:1px;background:#b9b9b9"></div>
<svg class="a" style="left:270.0px;top:100.0px" width="24" height="24" viewBox="0 0 24 24"><g fill="#d6d2cb" stroke="#bbb7b0" stroke-width="0.6"><path d="M4 21L4.5 16L12 3L15.5 5L8 18Z"/><path d="M8 22L8.5 17L16 4L19.5 6L12 19Z"/></g></svg>
<svg class="a" style="left:287px;top:121px" width="8" height="5" viewBox="0 0 8 5"><path d="M0 0H8L4 4.5Z" fill="#888"/></svg>
<svg class="a" style="left:300.0px;top:100.0px" width="24" height="24" viewBox="0 0 24 24"><path d="M3 22L4 16L16 2L20 5L8 19Z" fill="#dedad3" stroke="#c2beb6" stroke-width="0.8"/></svg>
<svg class="a" style="left:334.0px;top:100.0px" width="24" height="24" viewBox="0 0 24 24"><rect x="2" y="2" width="19" height="20" rx="2" fill="#d2d2d2" stroke="#c2c2c2"/><rect x="5" y="3" width="13" height="8" fill="#f0f0f0"/><path d="M7 5.5H16M7 7.5H16" stroke="#bbb" stroke-width="0.8"/><rect x="7" y="15" width="9" height="6" fill="#eee"/><path d="M14 23L15 19L21 12L23 14L17 21Z" fill="#cdc8c0"/></svg>
<svg class="a" style="left:367.0px;top:100.0px" width="24" height="24" viewBox="0 0 24 24"><path d="M4 20L20 4" stroke="#c8c8c8" stroke-width="0.9" stroke-dasharray="1.5 1"/><rect x="2" y="18" width="3.5" height="3.5" fill="#fff" stroke="#bbb" stroke-width="0.8"/><rect x="18.5" y="2.5" width="3.5" height="3.5" fill="#fff" stroke="#bbb" stroke-width="0.8"/></svg>
<svg class="a" style="left:397px;top:110px" width="8" height="5" viewBox="0 0 8 5"><path d="M0 0H8L4 4.5Z" fill="#888"/></svg>
<svg class="a" style="left:413.0px;top:100.0px" width="24" height="24" viewBox="0 0 24 24"><g fill="#e0ddd6" stroke="#c8c4bc" stroke-width="0.8"><circle cx="9" cy="4" r="2.3"/><circle cx="18" cy="7" r="2.3"/><circle cx="3" cy="13" r="2.3"/></g><rect x="11" y="13" width="10" height="10" rx="1.5" fill="#c9c4b8"/><circle cx="16" cy="18" r="2.2" fill="none" stroke="#fff" stroke-width="1"/></svg>
<svg class="a" style="left:446.0px;top:100.0px" width="24" height="24" viewBox="0 0 24 24"><path d="M2 22L6 5" stroke="#aaa" stroke-width="0.8"/><rect x="3" y="2" width="4.5" height="4.5" fill="#fff" stroke="#999" stroke-width="0.8"/><path d="M8 4H20" stroke="#ccc" stroke-width="1.2"/><path d="M9 22L20 11M12 11L21 20" stroke="#c8c4bc" stroke-width="2.8"/></svg>
<svg class="a" style="left:475px;top:110px" width="8" height="5" viewBox="0 0 8 5"><path d="M0 0H8L4 4.5Z" fill="#888"/></svg>
<svg class="a" style="left:490.0px;top:100.0px" width="24" height="24" viewBox="0 0 24 24"><rect x="1" y="2" width="17" height="5" fill="#d8d5cc" stroke="#c6c2b8" stroke-width="0.6"/><rect x="1" y="9" width="17" height="5" fill="#d8d5cc" stroke="#c6c2b8" stroke-width="0.6"/><rect x="1" y="16" width="17" height="5" fill="#d8d5cc" stroke="#c6c2b8" stroke-width="0.6"/><path d="M3 23L4 18L17 3L20 5.5L7 20.5Z" fill="#eeeae4" stroke="#bfbab2" stroke-width="0.8"/></svg>
<svg class="a" style="left:522.0px;top:100.0px" width="24" height="24" viewBox="0 0 24 24"><rect x="5" y="7" width="14" height="15" fill="#dcd4d2" stroke="#c8bebb" stroke-width="0.8"/><rect x="2" y="4" width="18" height="3" fill="#d6cdca"/><path d="M9 9V20M12 9V20M15 9V20" stroke="#f0ecea" stroke-width="1.2"/><rect x="16" y="4" width="6" height="2" fill="#e0b8b8"/></svg>
<svg class="a" style="left:555.0px;top:100.0px" width="24" height="24" viewBox="0 0 24 24"><path d="M2 8L18 16M2 14L18 6" stroke="#c8c4be" stroke-width="1.5"/><circle cx="19.5" cy="5.5" r="2.8" fill="none" stroke="#cbbdbd" stroke-width="1.3"/><circle cx="19.5" cy="16.5" r="2.8" fill="none" stroke="#cbbdbd" stroke-width="1.3"/></svg>
<svg class="a" style="left:588.0px;top:100.0px" width="24" height="24" viewBox="0 0 24 24"><path d="M9 2H16L20 6V18H9Z" fill="#f8f8f8" stroke="#c8c8c8" stroke-width="0.8"/><path d="M3 7H11L14 10V22H3Z" fill="#fafafa" stroke="#c0c0c0" stroke-width="0.8"/><path d="M5 13H12M5 15H12M5 17H12M5 19H12" stroke="#ccc" stroke-width="0.7"/></svg>
<svg class="a" style="left:621.0px;top:100.0px" width="24" height="24" viewBox="0 0 24 24"><rect x="3" y="3" width="17" height="20" rx="1" fill="#eeeeee" stroke="#c8c8c8" stroke-width="0.9"/><rect x="7" y="1.5" width="9" height="4" fill="#d8d8d8" stroke="#c0c0c0" stroke-width="0.6"/><path d="M6 7H15L17 9V21H6Z" fill="#fafafa" stroke="#c6c6c6" stroke-width="0.7"/><path d="M8 12H15M8 14H15M8 16H15M8 18H15" stroke="#ccc" stroke-width="0.7"/></svg>
<svg class="a" style="left:655.0px;top:100.0px" width="24" height="24" viewBox="0 0 24 24"><path d="M9 3L2 10L9 17V13C13 13 16 14 17 20C20 14 18 7 9 7Z" fill="#ddd9d2" stroke="#d0ccc5" stroke-width="0.5"/></svg>
<svg class="a" style="left:688.0px;top:100.0px" width="24" height="24" viewBox="0 0 24 24"><path d="M15 3L22 10L15 17V13C11 13 8 14 7 20C4 14 6 7 15 7Z" fill="#d8dcda" stroke="#cdd1cf" stroke-width="0.5"/></svg>
<div class="a" style="left:726px;top:105px;width:1px;height:1px;background:#b9b9b9"></div><div class="a" style="left:729px;top:105px;width:1px;height:1px;background:#b9b9b9"></div><div class="a" style="left:726px;top:108px;width:1px;height:1px;background:#b9b9b9"></div><div class="a" style="left:729px;top:108px;width:1px;height:1px;background:#b9b9b9"></div><div class="a" style="left:726px;top:111px;width:1px;height:1px;background:#b9b9b9"></div><div class="a" style="left:729px;top:111px;width:1px;height:1px;background:#b9b9b9"></div><div class="a" style="left:726px;top:114px;width:1px;height:1px;background:#b9b9b9"></div><div class="a" style="left:729px;top:114px;width:1px;height:1px;background:#b9b9b9"></div><div class="a" style="left:726px;top:117px;width:1px;height:1px;background:#b9b9b9"></div><div class="a" style="left:729px;top:117px;width:1px;height:1px;background:#b9b9b9"></div><div class="a" style="left:726px;top:120px;width:1px;height:1px;background:#b9b9b9"></div><div class="a" style="left:729px;top:120px;width:1px;height:1px;background:#b9b9b9"></div>
<svg class="a" style="left:735.0px;top:100.0px" width="24" height="24" viewBox="0 0 24 24"><path d="M4 5H23V15H4L1 10Z" fill="#e2e0d8" stroke="#cfccc4" stroke-width="0.8"/><text x="5.5" y="13.5" font-family="Liberation Sans" font-weight="bold" font-size="8.5" fill="#c8c5bd">abc</text></svg>
<svg class="a" style="left:770.0px;top:100.0px" width="24" height="24" viewBox="0 0 24 24"><circle cx="9" cy="8" r="7" fill="#d5d0c8"/><path d="M9 8V1A7 7 0 0 1 15.5 10.5Z" fill="#e0dcd4"/><path d="M9 8L15.5 10.5A7 7 0 0 1 4 13Z" fill="#ccd2cc"/><rect x="12" y="12" width="4" height="11" fill="#ddd8ce"/><rect x="17" y="16" width="4" height="7" fill="#e4dcd4"/><rect x="7" y="17" width="4" height="6" fill="#dcd8ce"/></svg>
<div class="a" style="left:802px;top:103px;width:1px;height:18px;background:#d0d0d0"></div>
<svg class="a" style="left:810.0px;top:100.0px" width="24" height="24" viewBox="0 0 24 24"><path d="M5 5H22V15H5L1 10Z" fill="#e8f0fb" stroke="#5a9ae0" stroke-width="1.1"/><text x="5.5" y="13.5" font-family="Liberation Sans" font-weight="bold" font-size="9" fill="#222">ab</text><circle cx="18" cy="20" r="4" fill="#b01818"/><path d="M17 12C17 10 19 10 19 12V16" stroke="#999" fill="#fff"/></svg>
<svg class="a" style="left:841.0px;top:100.0px" width="24" height="24" viewBox="0 0 24 24"><path d="M5 5H23V15H5L1 10Z" fill="#fff" stroke="#e02020" stroke-width="1.3"/><text x="5.5" y="13.5" font-family="Liberation Sans" font-weight="bold" font-size="8.8" fill="#e02020">abc</text></svg>
<div class="a" style="left:876px;top:103px;width:1px;height:18px;background:#d0d0d0"></div>
<svg class="a" style="left:883.0px;top:100.0px" width="24" height="24" viewBox="0 0 24 24"><path d="M4 5H23V15H4L1 10Z" fill="#e2e0d8" stroke="#cfccc4" stroke-width="0.8"/><text x="5.5" y="13.5" font-family="Liberation Sans" font-weight="bold" font-size="8.5" fill="#c8c5bd">ab</text><circle cx="18" cy="20" r="3.8" fill="#d2cccc"/></svg>
<svg class="a" style="left:916.0px;top:100.0px" width="24" height="24" viewBox="0 0 24 24"><path d="M4 5H23V15H4L1 10Z" fill="#e2e0d8" stroke="#cfccc4" stroke-width="0.8"/><text x="5.5" y="13.5" font-family="Liberation Sans" font-weight="bold" font-size="8.5" fill="#c8c5bd">abc</text><path d="M9 19C12 15 18 15 21 19C18 23 12 23 9 19Z" fill="#f6f6f6" stroke="#c0c0c0" stroke-width="0.7"/><circle cx="15" cy="19" r="1.8" fill="#c8c8c8"/></svg>
<svg class="a" style="left:950.0px;top:100.0px" width="24" height="24" viewBox="0 0 24 24"><path d="M4 5H23V15H4L1 10Z" fill="#e2e0d8" stroke="#cfccc4" stroke-width="0.8"/><text x="5.5" y="13.5" font-family="Liberation Sans" font-weight="bold" font-size="8.5" fill="#c8c5bd">abc</text><rect x="13" y="14" width="10" height="10" rx="1.5" fill="#d0d0d0"/><path d="M15 18H18V16L21.5 19L18 22V20H15Z" fill="#fff"/></svg>
<svg class="a" style="left:998px;top:108px" width="10" height="8" viewBox="0 0 10 8"><path d="M1 1L4 4L1 7M5.5 1L8.5 4L5.5 7" fill="none" stroke="#333" stroke-width="1.1"/></svg>
<div class="a" style="left:1018px;top:105px;width:1px;height:1px;background:#b9b9b9"></div><div class="a" style="left:1021px;top:105px;width:1px;height:1px;background:#b9b9b9"></div><div class="a" style="left:1018px;top:108px;width:1px;height:1px;background:#b9b9b9"></div><div class="a" style="left:1021px;top:108px;width:1px;height:1px;background:#b9b9b9"></div><div class="a" style="left:1018px;top:111px;width:1px;height:1px;background:#b9b9b9"></div><div class="a" style="left:1021px;top:111px;width:1px;height:1px;background:#b9b9b9"></div><div class="a" style="left:1018px;top:114px;width:1px;height:1px;background:#b9b9b9"></div><div class="a" style="left:1021px;top:114px;width:1px;height:1px;background:#b9b9b9"></div><div class="a" style="left:1018px;top:117px;width:1px;height:1px;background:#b9b9b9"></div><div class="a" style="left:1021px;top:117px;width:1px;height:1px;background:#b9b9b9"></div><div class="a" style="left:1018px;top:120px;width:1px;height:1px;background:#b9b9b9"></div><div class="a" style="left:1021px;top:120px;width:1px;height:1px;background:#b9b9b9"></div>
<svg class="a" style="left:1029.0px;top:100.0px" width="24" height="24" viewBox="0 0 24 24"><path d="M12 2L22 20H2Z" fill="#7fad22"/><path d="M12 10L16.5 18H7.5Z" fill="#f2f2f2"/><rect x="2" y="18" width="20" height="2" fill="#c6da60"/><rect x="2" y="20.5" width="20" height="2" fill="#f08a30"/></svg>
<svg class="a" style="left:1061px;top:108px" width="10" height="8" viewBox="0 0 10 8"><path d="M1 1L4 4L1 7M5.5 1L8.5 4L5.5 7" fill="none" stroke="#333" stroke-width="1.1"/></svg>
<div class="a" style="left:1080px;top:105px;width:1px;height:1px;background:#b9b9b9"></div><div class="a" style="left:1083px;top:105px;width:1px;height:1px;background:#b9b9b9"></div><div class="a" style="left:1080px;top:108px;width:1px;height:1px;background:#b9b9b9"></div><div class="a" style="left:1083px;top:108px;width:1px;height:1px;background:#b9b9b9"></div><div class="a" style="left:1080px;top:111px;width:1px;height:1px;background:#b9b9b9"></div><div class="a" style="left:1083px;top:111px;width:1px;height:1px;background:#b9b9b9"></div><div class="a" style="left:1080px;top:114px;width:1px;height:1px;background:#b9b9b9"></div><div class="a" style="left:1083px;top:114px;width:1px;height:1px;background:#b9b9b9"></div><div class="a" style="left:1080px;top:117px;width:1px;height:1px;background:#b9b9b9"></div><div class="a" style="left:1083px;top:117px;width:1px;height:1px;background:#b9b9b9"></div><div class="a" style="left:1080px;top:120px;width:1px;height:1px;background:#b9b9b9"></div><div class="a" style="left:1083px;top:120px;width:1px;height:1px;background:#b9b9b9"></div>
<svg class="a" style="left:1091.0px;top:100.0px" width="24" height="24" viewBox="0 0 24 24"><path d="M11.5 1.5C7 1.5 7 3 7 4.5V7H12V8H4.5C2.5 8 1.5 9.5 1.5 12.5C1.5 15.5 2.5 17 4.5 17H6.5V14C6.5 12 8 11 10 11H14.5C16 11 17 10 17 8.5V4.5C17 2.5 15 1.5 11.5 1.5Z" fill="#3c78b0"/><circle cx="9.5" cy="4" r="0.9" fill="#fff"/><path d="M12.5 22.5C17 22.5 17 21 17 19.5V17H12V16H19.5C21.5 16 22.5 14.5 22.5 11.5C22.5 8.5 21.5 7 19.5 7H17.5V10C17.5 12 16 13 14 13H9.5C8 13 7 14 7 15.5V19.5C7 21.5 9 22.5 12.5 22.5Z" fill="#f7d13c"/><path d="M15 18L20 20.5L15 23" fill="none" stroke="#333" stroke-width="1.2"/></svg>
<svg class="a" style="left:1122px;top:108px" width="10" height="8" viewBox="0 0 10 8"><path d="M1 1L4 4L1 7M5.5 1L8.5 4L5.5 7" fill="none" stroke="#333" stroke-width="1.1"/></svg>
<div class="a" style="left:1142px;top:105px;width:1px;height:1px;background:#b9b9b9"></div><div class="a" style="left:1145px;top:105px;width:1px;height:1px;background:#b9b9b9"></div><div class="a" style="left:1142px;top:108px;width:1px;height:1px;background:#b9b9b9"></div><div class="a" style="left:1145px;top:108px;width:1px;height:1px;background:#b9b9b9"></div><div class="a" style="left:1142px;top:111px;width:1px;height:1px;background:#b9b9b9"></div><div class="a" style="left:1145px;top:111px;width:1px;height:1px;background:#b9b9b9"></div><div class="a" style="left:1142px;top:114px;width:1px;height:1px;background:#b9b9b9"></div><div class="a" style="left:1145px;top:114px;width:1px;height:1px;background:#b9b9b9"></div><div class="a" style="left:1142px;top:117px;width:1px;height:1px;background:#b9b9b9"></div><div class="a" style="left:1145px;top:117px;width:1px;height:1px;background:#b9b9b9"></div><div class="a" style="left:1142px;top:120px;width:1px;height:1px;background:#b9b9b9"></div><div class="a" style="left:1145px;top:120px;width:1px;height:1px;background:#b9b9b9"></div>
<svg class="a" style="left:1153.0px;top:100.0px" width="24" height="24" viewBox="0 0 24 24"><rect x="2.5" y="2" width="19.5" height="20.5" fill="#6a96c8" stroke="#1f2f42" stroke-width="1.1"/><rect x="2.5" y="2" width="5" height="20.5" fill="#2a3a4e"/><text x="10.5" y="16.5" font-family="Liberation Serif" font-size="14" fill="#fff">?</text></svg>
<div class="a" style="left:1191px;top:105px;width:1px;height:1px;background:#b9b9b9"></div><div class="a" style="left:1194px;top:105px;width:1px;height:1px;background:#b9b9b9"></div><div class="a" style="left:1191px;top:108px;width:1px;height:1px;background:#b9b9b9"></div><div class="a" style="left:1194px;top:108px;width:1px;height:1px;background:#b9b9b9"></div><div class="a" style="left:1191px;top:111px;width:1px;height:1px;background:#b9b9b9"></div><div class="a" style="left:1194px;top:111px;width:1px;height:1px;background:#b9b9b9"></div><div class="a" style="left:1191px;top:114px;width:1px;height:1px;background:#b9b9b9"></div><div class="a" style="left:1194px;top:114px;width:1px;height:1px;background:#b9b9b9"></div><div class="a" style="left:1191px;top:117px;width:1px;height:1px;background:#b9b9b9"></div><div class="a" style="left:1194px;top:117px;width:1px;height:1px;background:#b9b9b9"></div><div class="a" style="left:1191px;top:120px;width:1px;height:1px;background:#b9b9b9"></div><div class="a" style="left:1194px;top:120px;width:1px;height:1px;background:#b9b9b9"></div>
<div class="t" style="left:8px;top:135.84px;font-size:12px;color:#000;transform:scaleX(0.9878);transform-origin:0 0;">Navegador</div>
<svg class="a" style="left:220px;top:137px" width="12" height="12" viewBox="0 0 12 12"><rect x="0.5" y="0.5" width="11" height="11" rx="2" fill="#f4f4f4" stroke="#777" stroke-width="1"/><rect x="4.5" y="2.5" width="5" height="5" rx="1" fill="none" stroke="#666" stroke-width="0.9"/><rect x="2.5" y="4.5" width="5" height="5" rx="1" fill="#f4f4f4" stroke="#666" stroke-width="0.9"/></svg><svg class="a" style="left:234px;top:137px" width="12" height="12" viewBox="0 0 12 12"><rect x="0.5" y="0.5" width="11" height="11" rx="2" fill="#f4f4f4" stroke="#777" stroke-width="1"/><path d="M3.2 3.2L8.8 8.8M8.8 3.2L3.2 8.8" stroke="#555" stroke-width="1.8"/></svg>
<svg class="a" style="left:12.0px;top:158.5px" width="16" height="16" viewBox="0 0 16 16"><rect x="1.5" y="1.5" width="12" height="11" fill="#f4f4f4" stroke="#666" stroke-width="0.9"/><circle cx="13.5" cy="13.5" r="2.6" fill="#6aa56d" stroke="#4d8050" stroke-width="0.6"/><circle cx="13.5" cy="13.5" r="1.2" fill="#b8dcb8"/></svg>
<svg class="a" style="left:37.0px;top:158.5px" width="16" height="16" viewBox="0 0 16 16"><path d="M2 7.5A6 5.5 0 0 1 12 3.5L13.5 2V7H8.5L10.5 5A4 3.5 0 0 0 4.5 7.5Z" fill="#5b8ac6"/><path d="M14 9.5A6 5.5 0 0 1 4 13.5L2.5 15V10H7.5L5.5 12A4 3.5 0 0 0 11.5 9.5Z" fill="#5b8ac6"/></svg>
<svg class="a" style="left:62.0px;top:158.5px" width="16" height="16" viewBox="0 0 16 16"><path d="M1.5 2.5H14.5L9.5 8.5V14.5L6.5 13V8.5Z" fill="#5b8ac6" stroke="#4670a8" stroke-width="0.6"/><rect x="1.5" y="1.5" width="13" height="2" fill="#f2d830"/></svg>
<svg class="a" style="left:87.0px;top:158.5px" width="16" height="16" viewBox="0 0 16 16"><path d="M2 2H7M2 2V13M2 7H6M2 13H6" stroke="#999" stroke-width="0.8"/><rect x="5" y="5" width="3" height="3" fill="#f29020"/><rect x="5" y="11" width="3" height="3" fill="#f29020"/><path d="M11 1L15.5 6H13V14H9.5V6H7Z" fill="#5b8ac6" stroke="#2f4f78" stroke-width="0.7"/></svg>
<svg class="a" style="left:112.0px;top:158.5px" width="16" height="16" viewBox="0 0 16 16"><circle cx="8" cy="8" r="7" fill="#5b8ac6"/><text x="5.8" y="12.5" font-family="Liberation Serif" font-style="italic" font-weight="bold" font-size="10" fill="#fff">i</text></svg>
<div class="a" style="left:4px;top:183px;width:243px;height:291px;border:1px solid #a9a9a9;background:#fff"></div>
<div class="a" style="left:5px;top:400px;width:227px;height:18px;background:#0078d7"></div>
<div class="a" style="left:91px;top:400px;width:141px;height:18px;background:#1683d8"></div>
<svg class="a" style="left:24px;top:185px" width="16" height="16" viewBox="0 0 16 16"><path d="M1.5 3.5C1.5 1.5 3 0.5 5 0.5H12C14.5 0.5 15.5 1.5 15.5 4V7C15.5 8.5 14.5 9 13.5 9.5H15.5V10.5H12.5L11.5 13C11 15 10.5 15.5 9 15.5C8 15.5 7.5 15 7.5 13V11.5C6 11.5 4 12.5 3 11C2 9.5 1.5 6.5 1.5 3.5Z" fill="#6b98cb" stroke="#3f6699" stroke-width="0.9"/><path d="M5 1.5C4.3 4 4.3 8 5.3 11M5.5 11V5.2H8.2V11M12.2 2C11.2 4 11.2 7 12.2 9" fill="none" stroke="#3f6699" stroke-width="0.8"/></svg><div class="t" style="left:46px;top:186.84px;font-size:12px;color:#000;transform:scaleX(0.9071);transform-origin:0 0;">PostgreSQL</div>
<svg class="a" style="left:10.5px;top:189.5px" width="6" height="7" viewBox="0 0 6 7"><path d="M0.5 0L5 3.5L0.5 7Z" fill="#5c5c5c"/></svg><svg class="a" style="left:24px;top:203px" width="16" height="16" viewBox="0 0 16 16"><rect x="1" y="1" width="14" height="14" fill="none" stroke="#3f5f8a" stroke-width="1" stroke-dasharray="1 1"/><rect x="3" y="3" width="10" height="10" fill="#6b96c8"/></svg><div class="t" style="left:46px;top:204.84px;font-size:12px;color:#000;transform:scaleX(0.9592);transform-origin:0 0;">SAP HANA</div>
<svg class="a" style="left:24px;top:221px" width="16" height="16" viewBox="0 0 16 16"><path d="M1 1C6 2 11 4 15 7C11 8 6 11 1 15C3 10 3 6 1 1Z" fill="#6b96c8" stroke="#3f6699" stroke-width="0.6"/><path d="M5 3C6 6 6 10 5 12M9 5C10 7 10 9 9 10" stroke="#3f6699" stroke-width="0.6" fill="none"/></svg><div class="t" style="left:46px;top:222.84px;font-size:12px;color:#000;transform:scaleX(0.9093);transform-origin:0 0;">MS SQL Server</div>
<svg class="a" style="left:24px;top:239px" width="16" height="16" viewBox="0 0 16 16"><rect x="0.8" y="3" width="14.4" height="10.5" rx="4" fill="#6b96c8" stroke="#3f5f8a" stroke-width="1.2"/></svg><div class="t" style="left:46.3px;top:240.84px;font-size:12px;color:#000;transform:scaleX(0.9478);transform-origin:0 0;">Oracle</div>
<svg class="a" style="left:24px;top:257px" width="16" height="16" viewBox="0 0 16 16"><ellipse cx="8" cy="8" rx="7.6" ry="6.9" fill="#c3d6ee" stroke="#6f95c3" stroke-width="1.1"/><path d="M2.5 5.5C3.5 4 5.5 4 6 5C6.3 6 5 7 4.5 7.5C5 8.5 5.5 10 4.8 12L4.2 12C4 10.5 3 9 2.8 8Z" fill="#3a6494"/><path d="M7.8 4.5C9 4 9.5 5 9.5 6C10 6.5 10.2 8 9.5 9.5C9 11 8.6 12 8.3 12.5C8 11 7.8 9.5 7.4 8.5C7 7.5 7.2 5.5 7.8 4.5Z" fill="#3a6494"/><path d="M9.5 4.2C11 3.5 13 4 13.5 5C14 6.5 13 7.5 12 7.2C11.5 6.8 10 6.5 9.5 5.5Z" fill="#3a6494"/></svg><div class="t" style="left:46px;top:258.84px;font-size:12px;color:#000;transform:scaleX(0.9808);transform-origin:0 0;">WMS/WMTS</div>
<svg class="a" style="left:9.5px;top:263px" width="8" height="5" viewBox="0 0 8 5"><path d="M0 0H8L4 4Z" fill="#5c5c5c"/></svg><svg class="a" style="left:40px;top:275px" width="16" height="16" viewBox="0 0 16 16"><path d="M1 8H7M11.5 3.5C9 4 7 6 7 8C7 10 9 12 11.5 12.5" fill="none" stroke="#9a5a00" stroke-width="1.9" stroke-linecap="round"/></svg><div class="t" style="left:62px;top:276.84px;font-size:12px;color:#000;transform:scaleX(1.0096);transform-origin:0 0;">sigugr</div>
<svg class="a" style="left:25px;top:281px" width="8" height="5" viewBox="0 0 8 5"><path d="M0 0H8L4 4Z" fill="#5c5c5c"/></svg><svg class="a" style="left:56px;top:293px" width="16" height="16" viewBox="0 0 16 16"><ellipse cx="8" cy="8" rx="7.6" ry="6.9" fill="#c3d6ee" stroke="#6f95c3" stroke-width="1.1"/><path d="M2.5 5.5C3.5 4 5.5 4 6 5C6.3 6 5 7 4.5 7.5C5 8.5 5.5 10 4.8 12L4.2 12C4 10.5 3 9 2.8 8Z" fill="#3a6494"/><path d="M7.8 4.5C9 4 9.5 5 9.5 6C10 6.5 10.2 8 9.5 9.5C9 11 8.6 12 8.3 12.5C8 11 7.8 9.5 7.4 8.5C7 7.5 7.2 5.5 7.8 4.5Z" fill="#3a6494"/><path d="M9.5 4.2C11 3.5 13 4 13.5 5C14 6.5 13 7.5 12 7.2C11.5 6.8 10 6.5 9.5 5.5Z" fill="#3a6494"/></svg><div class="t" style="left:78.6px;top:294.84px;font-size:12px;color:#000;transform:scaleX(0.9388);transform-origin:0 0;">GeoServer Web Map Service</div>
<svg class="a" style="left:41px;top:299px" width="8" height="5" viewBox="0 0 8 5"><path d="M0 0H8L4 4Z" fill="#5c5c5c"/></svg><svg class="a" style="left:73px;top:311px" width="16" height="16" viewBox="0 0 16 16"><rect x="1" y="1.5" width="4.5" height="4.5" fill="#1f2d3d"/><rect x="5.5" y="1.5" width="4.5" height="4.5" fill="#aec8e6"/><rect x="10" y="1.5" width="4" height="4.5" fill="#1f2d3d"/><rect x="1" y="6" width="4.5" height="4" fill="#aec8e6"/><rect x="5.5" y="6" width="4.5" height="4" fill="#1f2d3d"/><rect x="10" y="6" width="4" height="4" fill="#aec8e6"/><rect x="1" y="10" width="4.5" height="4.5" fill="#1f2d3d"/><rect x="5.5" y="10" width="4.5" height="4.5" fill="#aec8e6"/></svg><div class="t" style="left:94.5px;top:312.84px;font-size:12px;color:#000;transform:scaleX(0.8170);transform-origin:0 0;">B2</div>
<svg class="a" style="left:73px;top:329px" width="16" height="16" viewBox="0 0 16 16"><rect x="1" y="1.5" width="4.5" height="4.5" fill="#1f2d3d"/><rect x="5.5" y="1.5" width="4.5" height="4.5" fill="#aec8e6"/><rect x="10" y="1.5" width="4" height="4.5" fill="#1f2d3d"/><rect x="1" y="6" width="4.5" height="4" fill="#aec8e6"/><rect x="5.5" y="6" width="4.5" height="4" fill="#1f2d3d"/><rect x="10" y="6" width="4" height="4" fill="#aec8e6"/><rect x="1" y="10" width="4.5" height="4.5" fill="#1f2d3d"/><rect x="5.5" y="10" width="4.5" height="4.5" fill="#aec8e6"/></svg><div class="t" style="left:94.5px;top:330.84px;font-size:12px;color:#000;transform:scaleX(0.8170);transform-origin:0 0;">B3</div>
<svg class="a" style="left:73px;top:347px" width="16" height="16" viewBox="0 0 16 16"><rect x="1" y="1.5" width="4.5" height="4.5" fill="#1f2d3d"/><rect x="5.5" y="1.5" width="4.5" height="4.5" fill="#aec8e6"/><rect x="10" y="1.5" width="4" height="4.5" fill="#1f2d3d"/><rect x="1" y="6" width="4.5" height="4" fill="#aec8e6"/><rect x="5.5" y="6" width="4.5" height="4" fill="#1f2d3d"/><rect x="10" y="6" width="4" height="4" fill="#aec8e6"/><rect x="1" y="10" width="4.5" height="4.5" fill="#1f2d3d"/><rect x="5.5" y="10" width="4.5" height="4.5" fill="#aec8e6"/></svg><div class="t" style="left:94.5px;top:348.84px;font-size:12px;color:#000;transform:scaleX(0.8170);transform-origin:0 0;">B4</div>
<svg class="a" style="left:73px;top:365px" width="16" height="16" viewBox="0 0 16 16"><rect x="1" y="1.5" width="4.5" height="4.5" fill="#1f2d3d"/><rect x="5.5" y="1.5" width="4.5" height="4.5" fill="#aec8e6"/><rect x="10" y="1.5" width="4" height="4.5" fill="#1f2d3d"/><rect x="1" y="6" width="4.5" height="4" fill="#aec8e6"/><rect x="5.5" y="6" width="4.5" height="4" fill="#1f2d3d"/><rect x="10" y="6" width="4" height="4" fill="#aec8e6"/><rect x="1" y="10" width="4.5" height="4.5" fill="#1f2d3d"/><rect x="5.5" y="10" width="4.5" height="4.5" fill="#aec8e6"/></svg><div class="t" style="left:94.5px;top:366.84px;font-size:12px;color:#000;transform:scaleX(0.8170);transform-origin:0 0;">B5</div>
<svg class="a" style="left:73px;top:383px" width="16" height="16" viewBox="0 0 16 16"><rect x="1" y="1.5" width="4.5" height="4.5" fill="#1f2d3d"/><rect x="5.5" y="1.5" width="4.5" height="4.5" fill="#aec8e6"/><rect x="10" y="1.5" width="4" height="4.5" fill="#1f2d3d"/><rect x="1" y="6" width="4.5" height="4" fill="#aec8e6"/><rect x="5.5" y="6" width="4.5" height="4" fill="#1f2d3d"/><rect x="10" y="6" width="4" height="4" fill="#aec8e6"/><rect x="1" y="10" width="4.5" height="4.5" fill="#1f2d3d"/><rect x="5.5" y="10" width="4.5" height="4.5" fill="#aec8e6"/></svg><div class="t" style="left:94.5px;top:384.84px;font-size:12px;color:#000;transform:scaleX(0.8170);transform-origin:0 0;">B6</div>
<svg class="a" style="left:73px;top:401px" width="16" height="16" viewBox="0 0 16 16"><rect x="1" y="1.5" width="4.5" height="4.5" fill="#1f2d3d"/><rect x="5.5" y="1.5" width="4.5" height="4.5" fill="#aec8e6"/><rect x="10" y="1.5" width="4" height="4.5" fill="#1f2d3d"/><rect x="1" y="6" width="4.5" height="4" fill="#aec8e6"/><rect x="5.5" y="6" width="4.5" height="4" fill="#1f2d3d"/><rect x="10" y="6" width="4" height="4" fill="#aec8e6"/><rect x="1" y="10" width="4.5" height="4.5" fill="#1f2d3d"/><rect x="5.5" y="10" width="4.5" height="4.5" fill="#aec8e6"/></svg><div class="t" style="left:94.5px;top:402.84px;font-size:12px;color:#fff;transform:scaleX(0.8511);transform-origin:0 0;">B7</div>
<svg class="a" style="left:24px;top:419px" width="16" height="16" viewBox="0 0 16 16"><path d="M8 1L14 4V12L8 15L2 12V4Z" fill="#b8cde6" stroke="#6e8db5" stroke-width="0.9"/><path d="M2 4L8 7L14 4M8 7V15" fill="none" stroke="#6e8db5" stroke-width="0.9"/><path d="M8 1L14 4L8 7L2 4Z" fill="#d4e2f2"/></svg><div class="t" style="left:46.3px;top:420.84px;font-size:12px;color:#000;transform:scaleX(0.8818);transform-origin:0 0;">Scenes</div>
<svg class="a" style="left:24px;top:437px" width="16" height="16" viewBox="0 0 16 16"><circle cx="8" cy="8" r="2.6" fill="#5b84b8"/><path d="M4.5 4.5A5 5 0 0 0 4.5 11.5M11.5 4.5A5 5 0 0 1 11.5 11.5M2.5 2.5A8 8 0 0 0 2.5 13.5M13.5 2.5A8 8 0 0 1 13.5 13.5" fill="none" stroke="#555" stroke-width="0.9"/></svg><div class="t" style="left:46.3px;top:438.84px;font-size:12px;color:#000;transform:scaleX(0.9548);transform-origin:0 0;">SensorThings</div>
<div class="a" style="left:5px;top:455px;width:227px;height:4px;overflow:hidden"><div class="a" style="left:20px;top:0;width:15px;height:8px;border:1.5px solid #555;border-radius:3px;background:#cfd8e4"></div></div>
<div class="a" style="left:232px;top:184px;width:14px;height:275px;background:#e6e6e6;border-left:1px solid #d9d9d9"></div>
<div class="a" style="left:232px;top:184px;width:14px;height:14px;background:linear-gradient(90deg,#fdfdfd,#f0f0f0);border:1px solid #c6c6c6"></div>
<svg class="a" style="left:235px;top:188px" width="8" height="5" viewBox="0 0 8 5"><path d="M0 4.5H8L4 0.5Z" fill="#555"/></svg><div class="a" style="left:232px;top:285px;width:14px;height:121px;background:linear-gradient(90deg,#fcfcfc,#f2f2f2);border:1px solid #c6c6c6"></div>
<div class="a" style="left:232px;top:445px;width:14px;height:14px;background:linear-gradient(90deg,#fdfdfd,#f0f0f0);border:1px solid #c6c6c6"></div>
<svg class="a" style="left:235px;top:450px" width="8" height="5" viewBox="0 0 8 5"><path d="M0 0.5H8L4 4.5Z" fill="#555"/></svg><div class="a" style="left:4px;top:459px;width:229px;height:15px;background:#e6e6e6;border:1px solid #c6c6c6"></div>
<div class="a" style="left:4px;top:459px;width:15px;height:15px;background:linear-gradient(#fdfdfd,#f0f0f0);border:1px solid #c6c6c6"></div>
<svg class="a" style="left:9px;top:462px" width="5" height="8" viewBox="0 0 5 8"><path d="M4.5 0L0.5 4L4.5 8Z" fill="#555"/></svg><div class="a" style="left:18px;top:459px;width:163px;height:15px;background:linear-gradient(#fdfdfd,#f2f2f2);border:1px solid #c6c6c6"></div>
<div class="a" style="left:218px;top:459px;width:15px;height:15px;background:linear-gradient(#fdfdfd,#f0f0f0);border:1px solid #c6c6c6"></div>
<svg class="a" style="left:223px;top:462px" width="5" height="8" viewBox="0 0 5 8"><path d="M0.5 0L4.5 4L0.5 8Z" fill="#555"/></svg><div class="a" style="left:232px;top:459px;width:15px;height:15px;background:#f0f0f0;border:1px solid #c6c6c6"></div>
<div class="a" style="left:116px;top:476px;width:1px;height:1px;background:#b0b0b0"></div><div class="a" style="left:119px;top:476px;width:1px;height:1px;background:#b0b0b0"></div><div class="a" style="left:122px;top:476px;width:1px;height:1px;background:#b0b0b0"></div><div class="a" style="left:125px;top:476px;width:1px;height:1px;background:#b0b0b0"></div><div class="a" style="left:128px;top:476px;width:1px;height:1px;background:#b0b0b0"></div><div class="a" style="left:131px;top:476px;width:1px;height:1px;background:#b0b0b0"></div><div class="a" style="left:250px;top:450px;width:1px;height:1px;background:#b0b0b0"></div><div class="a" style="left:250px;top:453px;width:1px;height:1px;background:#b0b0b0"></div><div class="a" style="left:250px;top:456px;width:1px;height:1px;background:#b0b0b0"></div><div class="a" style="left:250px;top:459px;width:1px;height:1px;background:#b0b0b0"></div><div class="a" style="left:250px;top:462px;width:1px;height:1px;background:#b0b0b0"></div><div class="a" style="left:250px;top:465px;width:1px;height:1px;background:#b0b0b0"></div><div class="t" style="left:8px;top:481.84px;font-size:12px;color:#000;transform:scaleX(0.9369);transform-origin:0 0;">Capas</div>
<svg class="a" style="left:220px;top:483px" width="12" height="12" viewBox="0 0 12 12"><rect x="0.5" y="0.5" width="11" height="11" rx="2" fill="#f4f4f4" stroke="#777" stroke-width="1"/><rect x="4.5" y="2.5" width="5" height="5" rx="1" fill="none" stroke="#666" stroke-width="0.9"/><rect x="2.5" y="4.5" width="5" height="5" rx="1" fill="#f4f4f4" stroke="#666" stroke-width="0.9"/></svg><svg class="a" style="left:234px;top:483px" width="12" height="12" viewBox="0 0 12 12"><rect x="0.5" y="0.5" width="11" height="11" rx="2" fill="#f4f4f4" stroke="#777" stroke-width="1"/><path d="M3.2 3.2L8.8 8.8M8.8 3.2L3.2 8.8" stroke="#555" stroke-width="1.8"/></svg>
<svg class="a" style="left:11.0px;top:506.0px" width="16" height="16" viewBox="0 0 16 16"><path d="M9 8L15 2" stroke="#d08a20" stroke-width="2.2" stroke-linecap="round"/><path d="M3 9L9 7L11 10L7 15Z" fill="#e8b060"/><path d="M1.5 10L3 9L7 15L5 15Z" fill="#e03030"/><path d="M2 8.5L5 7.5L3 10Z" fill="#3060d0"/><path d="M3 8L9 7L10 8L4 9.5Z" fill="#f0d020"/></svg>
<svg class="a" style="left:37.0px;top:506.0px" width="16" height="16" viewBox="0 0 16 16"><rect x="1.5" y="5" width="9" height="9" fill="#f4f4f4" stroke="#666" stroke-width="0.9"/><rect x="4" y="3" width="9" height="9" fill="#f4f4f4" stroke="#666" stroke-width="0.9"/><path d="M7 1V9C7 10 9 10 9 9V3" fill="none" stroke="#4670a8" stroke-width="1"/><circle cx="12.5" cy="12.5" r="3" fill="#5ca05c"/><circle cx="12.5" cy="12.5" r="1.3" fill="#c8e6c8"/></svg>
<svg class="a" style="left:62.0px;top:506.0px" width="16" height="16" viewBox="0 0 16 16"><path d="M1 7C4 2 12 2 15 7C12 12 4 12 1 7Z" fill="#f4f4f4" stroke="#888" stroke-width="0.8"/><circle cx="8" cy="7" r="3.2" fill="#6b96c8"/><circle cx="7.5" cy="6.5" r="1.3" fill="#111"/><path d="M11 13H16L13.5 15.5Z" fill="#444"/></svg>
<svg class="a" style="left:87.0px;top:506.0px" width="16" height="16" viewBox="0 0 16 16"><path d="M1 2.5H14L9 8.5V15L6 13V8.5Z" fill="#6b96c8" stroke="#4670a8" stroke-width="0.6"/><rect x="1" y="1.5" width="13" height="2" fill="#f2d830"/><path d="M11 13H16L13.5 15.5Z" fill="#444"/></svg>
<svg class="a" style="left:112.0px;top:506.0px" width="16" height="16" viewBox="0 0 16 16"><text x="-1" y="11" font-family="Liberation Serif" font-size="15" fill="#c4c4c4">ε</text><path d="M8.5 9.5H15V15.5H9.5Z" fill="#e6e6e6" stroke="#d6d6d6" stroke-width="0.7"/><path d="M11 10V15M13 10V15" stroke="#f4f4f4" stroke-width="0.8"/></svg>
<svg class="a" style="left:149.0px;top:506.0px" width="16" height="16" viewBox="0 0 16 16"><path d="M2 2H7M2 2V13M2 7H6M2 13H6" stroke="#999" stroke-width="0.8"/><rect x="5" y="5" width="3" height="3" fill="#f29020"/><rect x="5" y="11" width="3" height="3" fill="#f29020"/><path d="M11 15L15.5 10H13V2H9.5V10H7Z" fill="#6b96c8" stroke="#2f4f78" stroke-width="0.7"/></svg>
<svg class="a" style="left:174.0px;top:506.0px" width="16" height="16" viewBox="0 0 16 16"><path d="M2 2H7M2 2V13M2 7H6M2 13H6" stroke="#999" stroke-width="0.8"/><rect x="5" y="5" width="3" height="3" fill="#f29020"/><rect x="5" y="11" width="3" height="3" fill="#f29020"/><path d="M11 1L15.5 6H13V14H9.5V6H7Z" fill="#5b8ac6" stroke="#2f4f78" stroke-width="0.7"/></svg>
<svg class="a" style="left:199.0px;top:506.0px" width="16" height="16" viewBox="0 0 16 16"><rect x="1.5" y="1.5" width="11" height="11" fill="#f4f4f4" stroke="#555" stroke-width="0.9"/><rect x="9" y="11" width="7" height="4" rx="1.5" fill="#e03030"/><path d="M10.5 13H14.5" stroke="#fff" stroke-width="1"/></svg>
<svg class="a" style="left:134px;top:512px" width="8" height="5" viewBox="0 0 8 5"><path d="M0 0H8L4 4.5Z" fill="#aaa"/></svg>
<div class="a" style="left:4px;top:530px;width:243px;height:250px;border:1px solid #a9a9a9;background:#fff"></div>
<div class="a" style="left:5px;top:531px;width:241px;height:18px;background:#efefef"></div>
<svg class="a" style="left:11px;top:538px" width="8" height="5" viewBox="0 0 8 5"><path d="M0 0H8L4 4Z" fill="#5c5c5c"/></svg><div class="a" style="left:28px;top:533px;width:14px;height:14px;border:1px solid #8a8a8a;background:#fff"></div><svg class="a" style="left:30px;top:535px" width="10" height="10" viewBox="0 0 10 10"><path d="M1.2 5.2L3.8 8L8.8 1.5" fill="none" stroke="#111" stroke-width="1.5"/></svg><svg class="a" style="left:49px;top:533px" width="16" height="16" viewBox="0 0 16 16"><rect x="1" y="1.5" width="4.5" height="4.5" fill="#1f2d3d"/><rect x="5.5" y="1.5" width="4.5" height="4.5" fill="#aec8e6"/><rect x="10" y="1.5" width="4" height="4.5" fill="#1f2d3d"/><rect x="1" y="6" width="4.5" height="4" fill="#aec8e6"/><rect x="5.5" y="6" width="4.5" height="4" fill="#1f2d3d"/><rect x="10" y="6" width="4" height="4" fill="#aec8e6"/><rect x="1" y="10" width="4.5" height="4.5" fill="#1f2d3d"/><rect x="5.5" y="10" width="4.5" height="4.5" fill="#aec8e6"/></svg><div class="t" style="left:70px;top:533.84px;font-size:12px;color:#000;font-weight:700;transform:scaleX(0.9776);transform-origin:0 0;"><u style="text-underline-offset:2px">B7</u></div>
<div class="a" style="left:48px;top:549px;width:20px;height:20px;border:1.5px solid #0000ff;background-color:#aab4f0;background-image:linear-gradient(45deg,#5a6ae8 25%,transparent 25%,transparent 75%,#5a6ae8 75%),linear-gradient(45deg,#5a6ae8 25%,transparent 25%,transparent 75%,#5a6ae8 75%);background-size:4px 4px;background-position:0 0,2px 2px"></div>
<div class="a" style="left:8px;top:783px;width:253px;height:22px;border:1px solid #b9b9b9;border-radius:3px;background:#fff"></div>
<svg class="a" style="left:16px;top:787px" width="14" height="14" viewBox="0 0 14 14"><circle cx="5.6" cy="5.6" r="4.3" fill="none" stroke="#777" stroke-width="1.1"/><path d="M8.8 8.8L12.5 12.5" stroke="#777" stroke-width="1.2"/></svg><div class="t" style="left:36px;top:788.04px;font-size:12px;color:#6d6d6d;transform:scaleX(0.8916);transform-origin:0 0;">Escriba para localizar (Ctrl+K)</div>
<div class="t" style="left:267.8px;top:788.04px;font-size:12px;color:#000;transform:scaleX(0.8381);transform-origin:0 0;">Eliminadas</div>
<div class="t" style="left:325.8px;top:788.04px;font-size:12px;color:#000;transform:scaleX(0.8734);transform-origin:0 0;">Coordenada</div>
<div class="a" style="left:388px;top:783px;width:99px;height:22px;border:1px solid #b9b9b9;border-radius:2px;background:#fff"></div>
<div class="t" style="left:395.4px;top:788.04px;font-size:12px;color:#000;transform:scaleX(0.9168);transform-origin:0 0;">464206&nbsp; 4100009</div>
<svg class="a" style="left:490px;top:785px" width="18" height="18" viewBox="0 0 18 18"><path d="M4 3C6 1 9 2 10 4L12 9C13 12 11 15 8 15C5 15 3 13 3 10Z" fill="#d0d0d0" stroke="#333" stroke-width="1.1"/><path d="M5 5L9 9M6 3L7 7" stroke="#333" stroke-width="0.9"/><circle cx="9" cy="12" r="3" fill="#fff" stroke="#333" stroke-width="1"/><circle cx="9" cy="12" r="1" fill="#333"/><path d="M13 3L15 1M14 5L17 4" stroke="#555" stroke-width="0.8"/></svg><div class="t" style="left:519.3px;top:788.04px;font-size:12px;color:#000;transform:scaleX(0.8243);transform-origin:0 0;">Escala</div>
<div class="a" style="left:553px;top:783px;width:80px;height:22px;border:1px solid #b9b9b9;border-radius:3px;background:#fff"></div>
<div class="a" style="left:613px;top:784px;width:19px;height:20px;border-left:1px solid #c8c8c8;background:#f7f7f7;border-radius:0 2px 2px 0"></div>
<svg class="a" style="left:619px;top:792px" width="8" height="4" viewBox="0 0 8 4"><path d="M0 0H8L4 4Z" fill="#555"/></svg><div class="t" style="left:557.6px;top:788.04px;font-size:12px;color:#000;transform:scaleX(0.9152);transform-origin:0 0;">1:114441</div>
<svg class="a" style="left:645px;top:786px" width="14" height="16" viewBox="0 0 14 16"><path d="M3 7V5A4 4 0 0 1 11 5V7" fill="none" stroke="#666" stroke-width="1.8"/><rect x="1" y="7" width="12" height="8" rx="1.5" fill="#666"/></svg><div class="t" style="left:667px;top:788.04px;font-size:12px;color:#000;transform:scaleX(0.8526);transform-origin:0 0;">Amplificador</div>
<div class="a" style="left:728px;top:784px;width:84px;height:20px;border:1px solid #b9b9b9;border-radius:3px;background:#fff"></div>
<div class="a" style="left:798px;top:785px;width:13px;height:18px;border-left:1px solid #d0d0d0;background:#fafafa;border-radius:0 2px 2px 0"></div>
<svg class="a" style="left:801px;top:788px" width="8" height="12" viewBox="0 0 8 12"><path d="M0.5 3.5H7.5L4 0.5Z" fill="#666"/><path d="M0.5 8.5H7.5L4 11.5Z" fill="#666"/></svg><div class="t" style="left:733px;top:788.04px;font-size:12px;color:#000;transform:scaleX(0.9120);transform-origin:0 0;">100%</div>
<div class="t" style="left:820.4px;top:788.04px;font-size:12px;color:#000;transform:scaleX(0.8865);transform-origin:0 0;">Rotación</div>
<div class="a" style="left:872px;top:784px;width:84px;height:20px;border:1px solid #b9b9b9;border-radius:3px;background:#fff"></div>
<div class="a" style="left:942px;top:785px;width:13px;height:18px;border-left:1px solid #d0d0d0;background:#fafafa;border-radius:0 2px 2px 0"></div>
<svg class="a" style="left:945px;top:788px" width="8" height="12" viewBox="0 0 8 12"><path d="M0.5 3.5H7.5L4 0.5Z" fill="#666"/><path d="M0.5 8.5H7.5L4 11.5Z" fill="#666"/></svg><div class="t" style="left:877px;top:788.04px;font-size:12px;color:#000;transform:scaleX(0.9908);transform-origin:0 0;">0,0 °</div>
<div class="a" style="left:962px;top:787px;width:14px;height:14px;border:1px solid #8a8a8a;background:#fff"></div><svg class="a" style="left:964px;top:789px" width="10" height="10" viewBox="0 0 10 10"><path d="M1.2 5.2L3.8 8L8.8 1.5" fill="none" stroke="#111" stroke-width="1.5"/></svg><div class="t" style="left:980.3px;top:788.04px;font-size:12px;color:#000;transform:scaleX(0.9039);transform-origin:0 0;">Representar</div>
<svg class="a" style="left:1056px;top:786px" width="16" height="16" viewBox="0 0 16 16"><circle cx="8" cy="8" r="6.8" fill="#e4e4e4" stroke="#777" stroke-width="1"/><path d="M1.5 6H14.5M1.5 10H14.5M8 1V15M8 1C4 4 4 12 8 15M8 1C12 4 12 12 8 15" fill="none" stroke="#777" stroke-width="0.8"/></svg><div class="t" style="left:1073px;top:788.04px;font-size:12px;color:#000;transform:scaleX(0.8393);transform-origin:0 0;">EPSG:25830</div>
<svg class="a" style="left:1155px;top:786px" width="18" height="16" viewBox="0 0 18 16"><ellipse cx="9" cy="7" rx="8" ry="6.5" fill="#666"/><path d="M11 12L15 15.5L13 11Z" fill="#666"/><circle cx="5.5" cy="7" r="1.2" fill="#fff"/><circle cx="9" cy="7" r="1.2" fill="#fff"/><circle cx="12.5" cy="7" r="1.2" fill="#fff"/></svg><div class="a" style="left:1199px;top:796px;width:1px;height:1px;background:#999"></div><div class="a" style="left:1196px;top:799px;width:1px;height:1px;background:#999"></div><div class="a" style="left:1199px;top:799px;width:1px;height:1px;background:#999"></div><div class="a" style="left:1193px;top:802px;width:1px;height:1px;background:#999"></div><div class="a" style="left:1196px;top:802px;width:1px;height:1px;background:#999"></div><div class="a" style="left:1199px;top:802px;width:1px;height:1px;background:#999"></div><div class="a" style="left:1190px;top:805px;width:1px;height:1px;background:#999"></div><div class="a" style="left:1193px;top:805px;width:1px;height:1px;background:#999"></div><div class="a" style="left:1196px;top:805px;width:1px;height:1px;background:#999"></div><div class="a" style="left:1199px;top:805px;width:1px;height:1px;background:#999"></div></body></html>
